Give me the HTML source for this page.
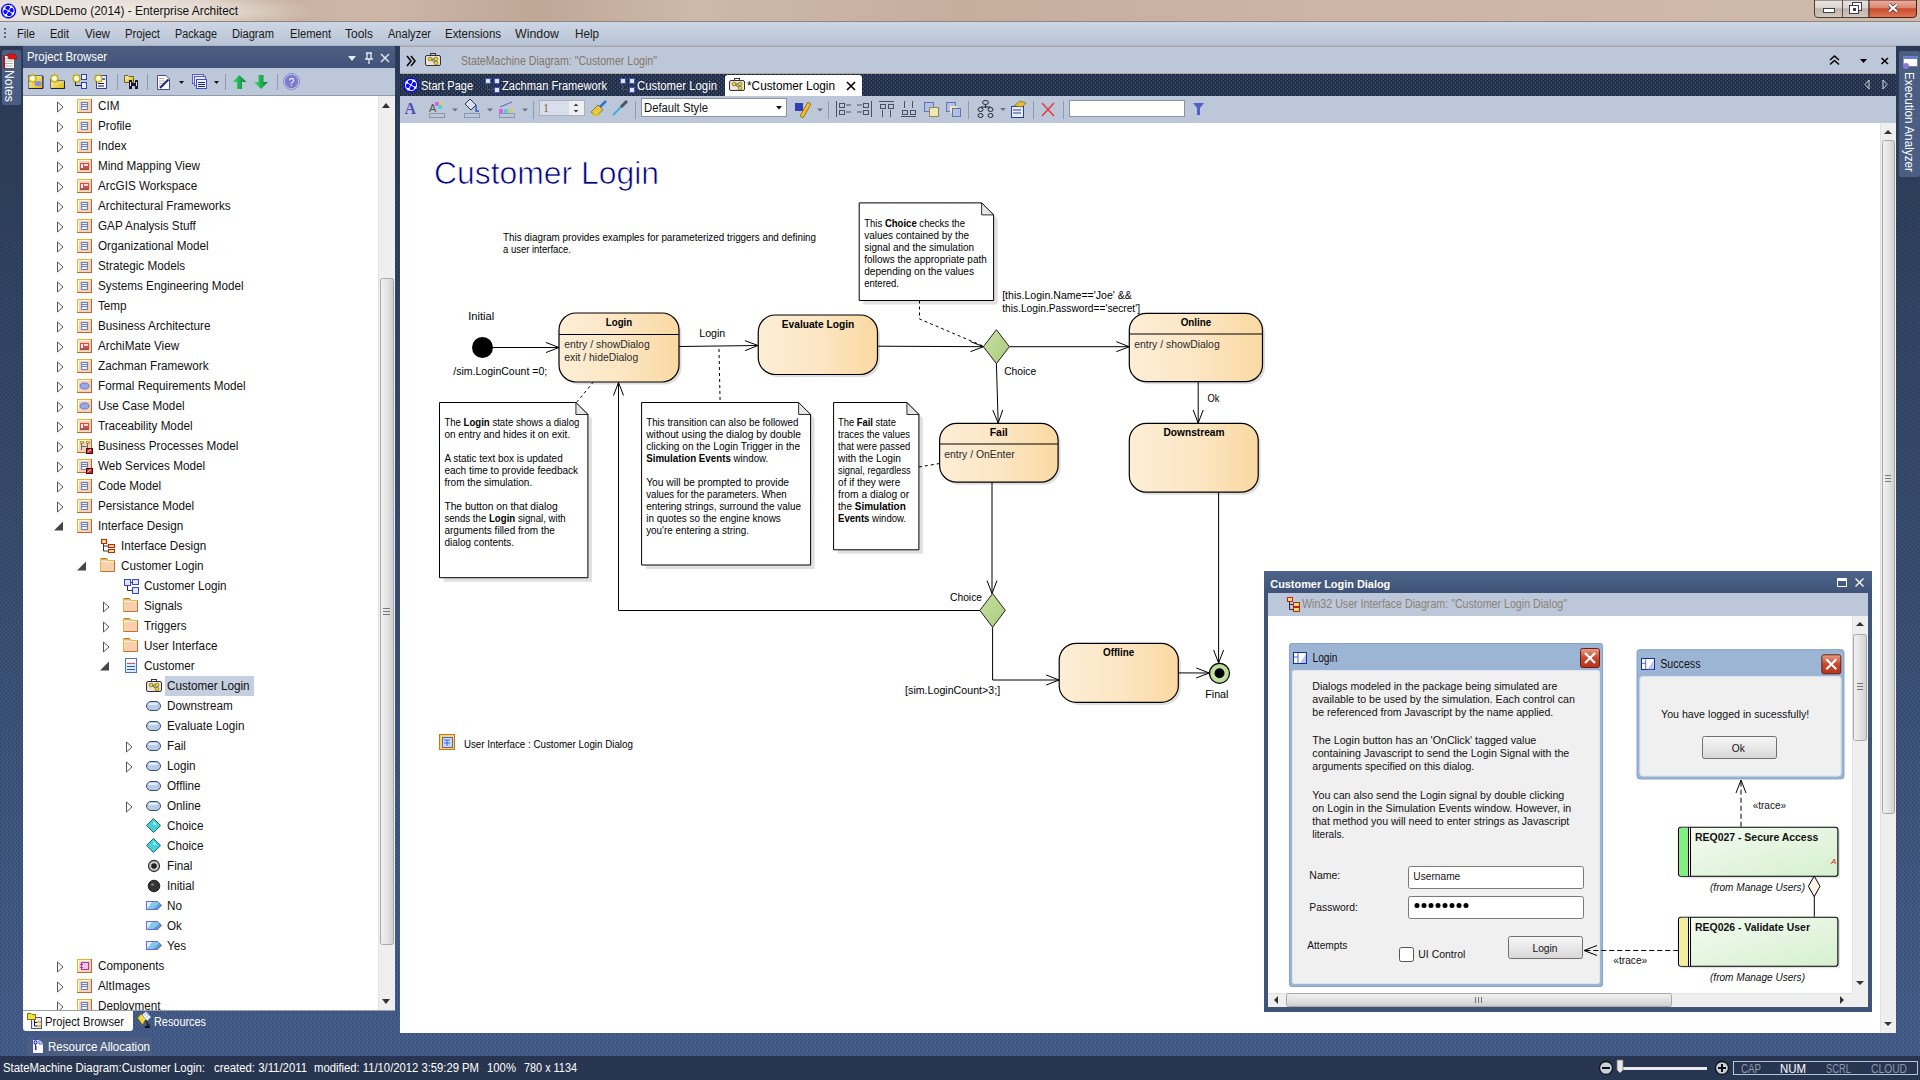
<!DOCTYPE html>
<html><head><meta charset="utf-8"><title>Enterprise Architect</title>
<style>
html,body{margin:0;padding:0;width:1920px;height:1080px;overflow:hidden;background:#3a4b6c;}
svg{display:block;font-family:"Liberation Sans", sans-serif;}
text{font-family:"Liberation Sans", sans-serif;}
</style></head><body>
<svg width="1920" height="1080" viewBox="0 0 1920 1080">
<defs>
<pattern id="navyDots" width="3" height="3" patternUnits="userSpaceOnUse">
  <rect width="3" height="3" fill="#2a3856"/><rect x="1" y="1" width="1" height="1" fill="#44557a"/>
</pattern>
<pattern id="midDots" width="4" height="4" patternUnits="userSpaceOnUse">
  <rect x="2" y="0" width="1" height="2" fill="#000" opacity="0.16"/><rect x="0" y="2" width="1" height="2" fill="#000" opacity="0.16"/>
</pattern>
<linearGradient id="bgG" x1="0" x2="0" y1="0" y2="1">
  <stop offset="0" stop-color="#2c3a56"/><stop offset="0.043" stop-color="#2c3b57"/><stop offset="0.51" stop-color="#384e70"/><stop offset="0.978" stop-color="#465e8c"/><stop offset="1" stop-color="#465e8c"/>
</linearGradient>
<radialGradient id="glowG"><stop offset="0" stop-color="#f4f0ec" stop-opacity="0.85"/><stop offset="0.6" stop-color="#f0ebe6" stop-opacity="0.6"/><stop offset="1" stop-color="#ede6e0" stop-opacity="0"/></radialGradient>
<pattern id="tabDots" width="4" height="4" patternUnits="userSpaceOnUse">
  <rect width="4" height="4" fill="#222d46"/><rect x="1" y="0" width="1" height="2" fill="#3e5075"/><rect x="3" y="2" width="1" height="2" fill="#3e5075"/>
</pattern>
<linearGradient id="titleG" x1="0" x2="1" y1="0" y2="0">
  <stop offset="0" stop-color="#e2d9d3"/><stop offset="0.06" stop-color="#d8cbc1"/><stop offset="0.12" stop-color="#c7b09f"/>
  <stop offset="0.2" stop-color="#cdb6a6"/><stop offset="0.28" stop-color="#bfa796"/><stop offset="0.36" stop-color="#cdb8a9"/>
  <stop offset="0.5" stop-color="#c6ae9d"/><stop offset="0.7" stop-color="#ccb5a5"/><stop offset="1" stop-color="#cfb9a9"/>
</linearGradient>
<linearGradient id="menuG" x1="0" x2="0" y1="0" y2="1">
  <stop offset="0" stop-color="#cdd6e4"/><stop offset="1" stop-color="#b7c3d5"/>
</linearGradient>
<linearGradient id="hdrG" x1="0" x2="0" y1="0" y2="1">
  <stop offset="0" stop-color="#4b5d81"/><stop offset="0.5" stop-color="#475a7e"/><stop offset="1" stop-color="#40527a"/>
</linearGradient>
<linearGradient id="stateG" x1="0" x2="1" y1="0" y2="0">
  <stop offset="0" stop-color="#fdeed6"/><stop offset="0.5" stop-color="#fce6c4"/><stop offset="1" stop-color="#fad9a2"/>
</linearGradient>
<linearGradient id="reqG" x1="0" x2="1" y1="0" y2="1">
  <stop offset="0" stop-color="#f4fbf2"/><stop offset="1" stop-color="#d6f0cf"/>
</linearGradient>
<linearGradient id="dlgTitleG" x1="0" x2="0" y1="0" y2="1">
  <stop offset="0" stop-color="#4f648a"/><stop offset="1" stop-color="#3f5378"/>
</linearGradient>
<linearGradient id="btnG" x1="0" x2="0" y1="0" y2="1">
  <stop offset="0" stop-color="#f6f6f6"/><stop offset="0.5" stop-color="#e8e8e8"/><stop offset="1" stop-color="#d6d6d6"/>
</linearGradient>
<linearGradient id="thumbV" x1="0" x2="1" y1="0" y2="0">
  <stop offset="0" stop-color="#f2f2f2"/><stop offset="0.5" stop-color="#e4e4e4"/><stop offset="1" stop-color="#cfcfcf"/>
</linearGradient>
<linearGradient id="thumbH" x1="0" x2="0" y1="0" y2="1">
  <stop offset="0" stop-color="#f2f2f2"/><stop offset="0.5" stop-color="#e2e2e2"/><stop offset="1" stop-color="#cdcdcd"/>
</linearGradient>
<linearGradient id="closeRed" x1="0" x2="0" y1="0" y2="1">
  <stop offset="0" stop-color="#e8a08a"/><stop offset="0.5" stop-color="#c9472c"/><stop offset="1" stop-color="#b8341c"/>
</linearGradient>
<radialGradient id="finalG"><stop offset="0" stop-color="#d8eec0"/><stop offset="1" stop-color="#b5d890"/></radialGradient>
<linearGradient id="diamG" x1="0" x2="1" y1="0" y2="1"><stop offset="0" stop-color="#c9e0a4"/><stop offset="1" stop-color="#a9cc7c"/></linearGradient>
<filter id="shadow" x="-5%" y="-5%" width="115%" height="115%"><feDropShadow dx="2" dy="2" stdDeviation="1.2" flood-color="#000" flood-opacity="0.18"/></filter>
</defs>
<rect x="0" y="0" width="1920" height="1080" fill="url(#bgG)" shape-rendering="crispEdges"/>
<rect x="0" y="0" width="1920" height="1080" fill="url(#midDots)" shape-rendering="crispEdges"/>
<rect x="0" y="0" width="1920" height="21" fill="url(#titleG)" shape-rendering="crispEdges"/>
<ellipse cx="125" cy="11" rx="190" ry="22" fill="url(#glowG)"/>
<rect x="0" y="21" width="1920" height="1" fill="#8c8580" shape-rendering="crispEdges"/>
<g transform="translate(8.5,11) rotate(-15)" shape-rendering="auto"><circle r="7.6" fill="#0a0aff"/><circle r="6.1" fill="#fff"/><circle cx="0" cy="-2.7" r="2.5" fill="#0a0aff"/><circle cx="2.7" cy="0" r="2.5" fill="#0a0aff"/><circle cx="0" cy="2.7" r="2.5" fill="#0a0aff"/><circle cx="-2.7" cy="0" r="2.5" fill="#0a0aff"/><path d="M-4.5,-4.5 L4.5,4.5 M4.5,-4.5 L-4.5,4.5" stroke="#fff" stroke-width="0.9"/></g>
<text x="21" y="15" font-size="12" fill="#111" textLength="217" lengthAdjust="spacingAndGlyphs">WSDLDemo (2014) - Enterprise Architect</text>
<linearGradient id="wbG" x1="0" x2="0" y1="0" y2="1"><stop offset="0" stop-color="#ece6e2"/><stop offset="0.45" stop-color="#dcd3cd"/><stop offset="0.5" stop-color="#bfb2a8"/><stop offset="1" stop-color="#d4c8c0"/></linearGradient>
<linearGradient id="wcG" x1="0" x2="0" y1="0" y2="1"><stop offset="0" stop-color="#eeb0a0"/><stop offset="0.45" stop-color="#d88870"/><stop offset="0.5" stop-color="#c84a2a"/><stop offset="1" stop-color="#e07a58"/></linearGradient>
<path d="M1814.5,0 V14 Q1814.5,17.5 1818,17.5 H1869 V0 Z" fill="url(#wbG)" stroke="#4a4038" stroke-width="1"/>
<path d="M1869,0 V17.5 H1913 Q1916.5,17.5 1916.5,14 V0 Z" fill="url(#wcG)" stroke="#4a2018" stroke-width="1"/>
<rect x="1841.5" y="0" width="1" height="17" fill="#5a5048" shape-rendering="crispEdges"/>
<rect x="1823.5" y="8.5" width="11" height="4" fill="#fff" stroke="#3a4050" stroke-width="1" shape-rendering="crispEdges"/>
<rect x="1852.5" y="2.5" width="9" height="8" fill="#fff" stroke="#3a4050" stroke-width="1" shape-rendering="crispEdges"/>
<rect x="1849.5" y="5.5" width="9" height="8" fill="#fff" stroke="#3a4050" stroke-width="1" shape-rendering="crispEdges"/>
<rect x="1853" y="8" width="3" height="3" fill="#3a4050" shape-rendering="crispEdges"/>
<path d="M1889,4.5 L1897,11.5 M1897,4.5 L1889,11.5" fill="none" stroke="#3a3a48" stroke-width="3.6"/>
<path d="M1889,4.5 L1897,11.5 M1897,4.5 L1889,11.5" fill="none" stroke="#fff" stroke-width="2.2"/>
<rect x="0" y="22" width="1920" height="24" fill="url(#menuG)" shape-rendering="crispEdges"/>
<rect x="4" y="28" width="2" height="2" fill="#5a6478" shape-rendering="crispEdges"/>
<rect x="4" y="32" width="2" height="2" fill="#5a6478" shape-rendering="crispEdges"/>
<rect x="4" y="36" width="2" height="2" fill="#5a6478" shape-rendering="crispEdges"/>
<text x="17" y="38" font-size="12" fill="#1a1a1a" textLength="18" lengthAdjust="spacingAndGlyphs">File</text>
<text x="50" y="38" font-size="12" fill="#1a1a1a" textLength="19" lengthAdjust="spacingAndGlyphs">Edit</text>
<text x="85" y="38" font-size="12" fill="#1a1a1a" textLength="25" lengthAdjust="spacingAndGlyphs">View</text>
<text x="125" y="38" font-size="12" fill="#1a1a1a" textLength="35" lengthAdjust="spacingAndGlyphs">Project</text>
<text x="175" y="38" font-size="12" fill="#1a1a1a" textLength="42" lengthAdjust="spacingAndGlyphs">Package</text>
<text x="232" y="38" font-size="12" fill="#1a1a1a" textLength="42" lengthAdjust="spacingAndGlyphs">Diagram</text>
<text x="290" y="38" font-size="12" fill="#1a1a1a" textLength="41" lengthAdjust="spacingAndGlyphs">Element</text>
<text x="345" y="38" font-size="12" fill="#1a1a1a" textLength="28" lengthAdjust="spacingAndGlyphs">Tools</text>
<text x="388" y="38" font-size="12" fill="#1a1a1a" textLength="43" lengthAdjust="spacingAndGlyphs">Analyzer</text>
<text x="445" y="38" font-size="12" fill="#1a1a1a" textLength="56" lengthAdjust="spacingAndGlyphs">Extensions</text>
<text x="515" y="38" font-size="12" fill="#1a1a1a" textLength="44" lengthAdjust="spacingAndGlyphs">Window</text>
<text x="575" y="38" font-size="12" fill="#1a1a1a" textLength="24" lengthAdjust="spacingAndGlyphs">Help</text>
<rect x="0" y="45" width="1920" height="1" fill="#aab4c4" shape-rendering="crispEdges"/>
<rect x="2" y="50" width="19" height="55" fill="#4a5d82" rx="2"/>
<rect x="3.5" y="55.5" width="11" height="13" fill="#fff" stroke="#555" stroke-width="1" shape-rendering="crispEdges"/>
<rect x="3" y="55" width="1.5" height="14" fill="#a02020" shape-rendering="crispEdges"/>
<path d="M5,58.5 h8 M5,61 h8 M5,63.5 h8 M5,66 h8" fill="none" stroke="#999" stroke-width="0.8"/>
<path d="M7,55 Q12,52 16.5,56 L16.5,59 L9,59 Z" fill="#e81010" stroke="#801010" stroke-width="0.6"/>
<text transform="translate(5,70) rotate(90)" font-size="12" fill="#fff" textLength="32" lengthAdjust="spacingAndGlyphs">Notes</text>
<rect x="1899" y="51" width="21" height="126" fill="#4a5d82" rx="2"/>
<rect x="1903" y="56" width="14" height="10" fill="#fff" stroke="#7788aa" stroke-width="0.8" shape-rendering="crispEdges"/>
<rect x="1903" y="56" width="14" height="3" fill="#6a7fd0" shape-rendering="crispEdges"/>
<circle cx="1906" cy="66" r="3" fill="#8c7ad0"/>
<text transform="translate(1905,72) rotate(90)" font-size="12" fill="#fff" textLength="100" lengthAdjust="spacingAndGlyphs">Execution Analyzer</text>
<rect x="23" y="46" width="372" height="22" fill="url(#hdrG)" shape-rendering="crispEdges"/>
<text x="27" y="61" font-size="12" fill="#fff" textLength="80" lengthAdjust="spacingAndGlyphs">Project Browser</text>
<path d="M348,56 L356,56 L352,61 Z" fill="#e8ecf4"/>
<path d="M366,53 L372,53 M367,53 L367,59 M371,53 L371,59 M365,59 L373,59 M369,59 L369,64" fill="none" stroke="#e8ecf4" stroke-width="1.3"/>
<path d="M381,54 L389,62 M389,54 L381,62" fill="none" stroke="#e8ecf4" stroke-width="1.4"/>
<rect x="23" y="68" width="372" height="27" fill="#bcc8da" shape-rendering="crispEdges"/>
<rect x="23" y="95" width="372" height="1" fill="#8e99ab" shape-rendering="crispEdges"/>
<linearGradient id="yelG" x1="0" x2="1" y1="0" y2="1"><stop offset="0" stop-color="#fff8c0"/><stop offset="1" stop-color="#d8b800"/></linearGradient>
<rect x="28.5" y="75.5" width="14" height="13" fill="url(#yelG)" stroke="#6a6ab0" stroke-width="1" shape-rendering="crispEdges"/>
<path d="M29,88.5 H43 V76" fill="none" stroke="#202040" stroke-width="1"/>
<ellipse cx="38" cy="83.5" rx="3.5" ry="2.5" fill="#8a8ae0"/>
<polygon points="37.10,78.50 35.46,79.72 35.75,81.75 33.72,81.46 32.50,83.10 31.28,81.46 29.25,81.75 29.54,79.72 27.90,78.50 29.54,77.28 29.25,75.25 31.28,75.54 32.50,73.90 33.72,75.54 35.75,75.25 35.46,77.28" fill="#e8d000" stroke="#9a8000" stroke-width="0.5"/>
<circle cx="32.5" cy="78.5" r="2.4" fill="#fff"/>
<path d="M50.5,88.5 V78.5 H56 L57,80.5 H64.5 V88.5 Z" fill="url(#yelG)" stroke="#6a6ab0" stroke-width="1"/>
<path d="M51,88.5 H64.5 V81" fill="none" stroke="#202040" stroke-width="1"/>
<polygon points="59.10,78.50 57.46,79.72 57.75,81.75 55.72,81.46 54.50,83.10 53.28,81.46 51.25,81.75 51.54,79.72 49.90,78.50 51.54,77.28 51.25,75.25 53.28,75.54 54.50,73.90 55.72,75.54 57.75,75.25 57.46,77.28" fill="#e8d000" stroke="#9a8000" stroke-width="0.5"/>
<circle cx="54.5" cy="78.5" r="2.4" fill="#fff"/>
<rect x="81.5" y="74.5" width="5" height="5" fill="#e8eeff" stroke="#3040b0" stroke-width="1" shape-rendering="crispEdges"/>
<rect x="81.5" y="82.5" width="5" height="6" fill="#e8eeff" stroke="#3040b0" stroke-width="1" shape-rendering="crispEdges"/>
<path d="M75.5,80 V85.5 H81" fill="none" stroke="#222" stroke-width="1"/>
<polygon points="81.10,78.50 79.46,79.72 79.75,81.75 77.72,81.46 76.50,83.10 75.28,81.46 73.25,81.75 73.54,79.72 71.90,78.50 73.54,77.28 73.25,75.25 75.28,75.54 76.50,73.90 77.72,75.54 79.75,75.25 79.46,77.28" fill="#e8d000" stroke="#9a8000" stroke-width="0.5"/>
<circle cx="76.5" cy="78.5" r="2.4" fill="#fff"/>
<rect x="96.5" y="75.5" width="10" height="13" fill="#eef2ff" stroke="#3a4090" stroke-width="1" shape-rendering="crispEdges"/>
<path d="M98,83.5 H104 M98,86 H104" fill="none" stroke="#222" stroke-width="1"/>
<rect x="102" y="78" width="3" height="2" fill="#3a70d0" shape-rendering="crispEdges"/>
<polygon points="103.10,78.50 101.46,79.72 101.75,81.75 99.72,81.46 98.50,83.10 97.28,81.46 95.25,81.75 95.54,79.72 93.90,78.50 95.54,77.28 95.25,75.25 97.28,75.54 98.50,73.90 99.72,75.54 101.75,75.25 101.46,77.28" fill="#e8d000" stroke="#9a8000" stroke-width="0.5"/>
<circle cx="98.5" cy="78.5" r="2.4" fill="#fff"/>
<rect x="117" y="74" width="1" height="16" fill="#8e99ab" shape-rendering="crispEdges"/>
<path d="M124.5,82.5 V75.5 H128 L129,76.5 H133.5 V82.5 Z" fill="url(#yelG)" stroke="#6a6030" stroke-width="1"/>
<path d="M129,80 h3 v9 h-3 Z M135,80 h3 v9 h-3 Z" fill="#1a1a30"/>
<rect x="131" y="83" width="5" height="3" fill="#1a1a30" shape-rendering="crispEdges"/>
<rect x="130" y="82" width="1" height="4" fill="#e0e0f0" shape-rendering="crispEdges"/>
<rect x="136" y="82" width="1" height="4" fill="#e0e0f0" shape-rendering="crispEdges"/>
<rect x="147" y="74" width="1" height="16" fill="#8e99ab" shape-rendering="crispEdges"/>
<path d="M157.5,75.5 H166 L169.5,79 V89.5 H157.5 Z" fill="#fff" stroke="#4a4a90" stroke-width="1"/>
<path d="M159,78.5 h5 M159,81 h6 M159,83.5 h6 M159,86 h5" fill="none" stroke="#aaa" stroke-width="1"/>
<path d="M160,88 L168.5,79.5" fill="none" stroke="#1a2a80" stroke-width="2"/>
<path d="M179,81 L184,81 L181.5,84 Z" fill="#111"/>
<rect x="192.5" y="74.5" width="11" height="9" fill="#e0e8ff" stroke="#5a60c0" stroke-width="1" shape-rendering="crispEdges"/>
<rect x="194.5" y="76.5" width="11" height="9" fill="#e8eeff" stroke="#5a60c0" stroke-width="1" shape-rendering="crispEdges"/>
<rect x="196.5" y="79.5" width="10" height="9" fill="#eef2ff" stroke="#3a50c0" stroke-width="1" shape-rendering="crispEdges"/>
<path d="M198,82.5 h7 M198,84.5 h7 M198,86.5 h7" fill="none" stroke="#1a2a60" stroke-width="1"/>
<path d="M214,81 L219,81 L216.5,84 Z" fill="#111"/>
<rect x="225" y="74" width="1" height="16" fill="#8e99ab" shape-rendering="crispEdges"/>
<linearGradient id="grnG" x1="0" x2="1" y1="0" y2="0"><stop offset="0" stop-color="#40e070"/><stop offset="0.5" stop-color="#20b050"/><stop offset="1" stop-color="#107a38"/></linearGradient>
<path d="M239.5,75 L246.5,82 H242 V89 H237 V82 H232.5 Z" fill="url(#grnG)"/>
<path d="M261,89 L268,82 H263.5 V75 H258.5 V82 H254 Z" fill="url(#grnG)"/>
<rect x="277" y="74" width="1" height="16" fill="#8e99ab" shape-rendering="crispEdges"/>
<circle cx="291.5" cy="81.5" r="7.3" fill="#7c7cc8" stroke="#c8ccf0" stroke-width="1.2"/>
<circle cx="291.5" cy="81.5" r="8" fill="none" stroke="#5a5ab0" stroke-width="0.6"/>
<text x="291.5" y="85.5" font-size="10" fill="#fff" text-anchor="middle">?</text>
<rect x="23" y="96" width="355" height="914" fill="#fff" shape-rendering="crispEdges"/>
<rect x="378" y="96" width="17" height="914" fill="#efefef" shape-rendering="crispEdges"/>
<rect x="378" y="96" width="1" height="914" fill="#e3e3e3" shape-rendering="crispEdges"/>
<path d="M382,108 L390,108 L386,103 Z" fill="#333"/>
<path d="M382,999 L390,999 L386,1004 Z" fill="#333"/>
<rect x="380.5" y="278.5" width="13" height="666" fill="url(#thumbV)" stroke="#a8a8a8" stroke-width="1" rx="2"/>
<rect x="383" y="608" width="7" height="1" fill="#777" shape-rendering="crispEdges"/>
<rect x="383" y="611" width="7" height="1" fill="#777" shape-rendering="crispEdges"/>
<rect x="383" y="614" width="7" height="1" fill="#777" shape-rendering="crispEdges"/>
<rect x="23" y="1010" width="372" height="1" fill="#9aa0aa" shape-rendering="crispEdges"/>
<g shape-rendering="auto">
<path d="M23,1011 L133,1011 L133,1028 Q133,1031 130,1031 L26,1031 Q23,1031 23,1028 Z" fill="#fff"/>
</g>
<rect x="31.5" y="1017.5" width="10" height="11" fill="#e8ecff" stroke="#4a50a0" stroke-width="1" shape-rendering="crispEdges"/>
<path d="M34.5,1020 V1026 H37 M34.5,1022.5 H37" fill="none" stroke="#222" stroke-width="1"/>
<rect x="37" y="1021" width="4" height="2" fill="#e0c020" shape-rendering="crispEdges"/>
<rect x="37" y="1025" width="4" height="2" fill="#e0c020" shape-rendering="crispEdges"/>
<path d="M27.5,1019.5 V1013.5 H31 L32,1014.5 H35.5 V1019.5 Z" fill="#f0e040" stroke="#807010" stroke-width="1"/>
<text x="45" y="1026" font-size="12" fill="#111" textLength="79" lengthAdjust="spacingAndGlyphs">Project Browser</text>
<path d="M137.5,1018 L141,1014 L146,1019 L142.5,1025 Z" fill="#f0d840" stroke="#706010" stroke-width="0.8"/>
<path d="M142,1015 L146,1011.5 L151,1017 L147,1021 Z" fill="#fff" stroke="#8090c0" stroke-width="0.7"/>
<path d="M144,1014 L149,1019 M145.5,1012.5 L150,1017.5 M143,1016 L147.5,1013 M144.5,1018 L149,1015" fill="none" stroke="#a0a8d0" stroke-width="0.5"/>
<path d="M146,1020 L148,1026 L149.5,1024" fill="none" stroke="#222" stroke-width="1.2"/>
<rect x="145" y="1026" width="5" height="1.5" fill="#111" shape-rendering="crispEdges"/>
<text x="154" y="1026" font-size="12" fill="#fff" textLength="52" lengthAdjust="spacingAndGlyphs">Resources</text>
<rect x="28" y="1037" width="123" height="19" fill="#4b5e82" shape-rendering="crispEdges"/>
<path d="M32.5,1039.5 H39 L43.5,1044 V1053.5 H32.5 Z" fill="#fff" stroke="#4050b0" stroke-width="1"/>
<path d="M39,1039.5 V1044 H43.5" fill="#c8d0f0" stroke="#4050b0" stroke-width="0.8"/>
<circle cx="35.5" cy="1042.5" r="1.6" fill="none" stroke="#2030a0" stroke-width="1.1"/>
<path d="M35.5,1044 V1050 M35.5,1047 H37 M35.5,1049 H37" fill="none" stroke="#2030a0" stroke-width="1.1"/>
<text x="48" y="1051" font-size="12" fill="#fff" textLength="102" lengthAdjust="spacingAndGlyphs">Resource Allocation</text>
<rect x="0" y="1056" width="1920" height="24" fill="#283550" shape-rendering="crispEdges"/>
<text x="3" y="1072" font-size="12" fill="#fff" textLength="202" lengthAdjust="spacingAndGlyphs">StateMachine Diagram:Customer Login:</text>
<text x="214" y="1072" font-size="12" fill="#fff" textLength="93" lengthAdjust="spacingAndGlyphs">created: 3/11/2011</text>
<text x="314" y="1072" font-size="12" fill="#fff" textLength="165" lengthAdjust="spacingAndGlyphs">modified: 11/10/2012 3:59:29 PM</text>
<text x="487" y="1072" font-size="12" fill="#fff" textLength="29" lengthAdjust="spacingAndGlyphs">100%</text>
<text x="524" y="1072" font-size="12" fill="#fff" textLength="53" lengthAdjust="spacingAndGlyphs">780 x 1134</text>
<g shape-rendering="auto">
<circle cx="1606" cy="1068" r="6.5" fill="#c8d0de" stroke="#111" stroke-width="1.3"/>
<rect x="1602" y="1067.3" width="8" height="1.6" fill="#111" shape-rendering="crispEdges"/>
<rect x="1622" y="1066.5" width="85" height="3" fill="#e8e8e8" shape-rendering="crispEdges"/>
<path d="M1617,1060 h6 v10 l-3,3 l-3,-3 Z" fill="#e6e6e6" stroke="#777" stroke-width="0.7"/>
<circle cx="1722" cy="1068" r="6.5" fill="#c8d0de" stroke="#111" stroke-width="1.3"/>
<rect x="1718" y="1067.3" width="8" height="1.6" fill="#111" shape-rendering="crispEdges"/>
<rect x="1721.2" y="1064" width="1.6" height="8" fill="#111" shape-rendering="crispEdges"/>
</g>
<rect x="1733.5" y="1061.5" width="184" height="13" fill="none" stroke="#b8c4d8" stroke-width="1" shape-rendering="crispEdges"/>
<text x="1741" y="1073" font-size="12" fill="#8c96a8" textLength="20" lengthAdjust="spacingAndGlyphs">CAP</text>
<text x="1780" y="1073" font-size="12" fill="#fff" textLength="26" lengthAdjust="spacingAndGlyphs">NUM</text>
<text x="1826" y="1073" font-size="12" fill="#8c96a8" textLength="25" lengthAdjust="spacingAndGlyphs">SCRL</text>
<text x="1871" y="1073" font-size="12" fill="#8c96a8" textLength="36" lengthAdjust="spacingAndGlyphs">CLOUD</text>
<rect x="400" y="46" width="1496" height="28" fill="#bcc8da" shape-rendering="crispEdges"/>
<rect x="400" y="46" width="1496" height="1" fill="#aca6a4" shape-rendering="crispEdges"/>
<rect x="400" y="73" width="1496" height="1" fill="#b0a8a0" shape-rendering="crispEdges"/>
<path d="M407,56 L411,61 L407,66 M411,56 L415,61 L411,66" fill="none" stroke="#000" stroke-width="1.5"/>
<g shape-rendering="auto"><rect x="430.5" y="53.5" width="5" height="3" fill="none" stroke="#333" stroke-width="1"/><rect x="425.5" y="55.5" width="15" height="10" rx="1.5" fill="#f2e2dc" stroke="#333" stroke-width="1"/><path d="M430,59 H436 V63 M430,59 L436,63" stroke="#333" stroke-width="0.8" fill="none"/><circle cx="430" cy="59" r="1.9" fill="#f0e000" stroke="#555" stroke-width="0.6"/><circle cx="436" cy="59" r="1.9" fill="#f0e000" stroke="#555" stroke-width="0.6"/><circle cx="436" cy="63" r="1.9" fill="#f0e000" stroke="#555" stroke-width="0.6"/></g>
<text x="461" y="65" font-size="12" fill="#857565" textLength="196" lengthAdjust="spacingAndGlyphs">StateMachine Diagram: "Customer Login"</text>
<path d="M1830,60 L1834.5,56 L1839,60 M1830,64.5 L1834.5,60.5 L1839,64.5" fill="none" stroke="#000" stroke-width="1.5"/>
<path d="M1860,59 L1867,59 L1863.5,63 Z" fill="#000"/>
<path d="M1881.5,58 L1888,64 M1888,58 L1881.5,64" fill="none" stroke="#000" stroke-width="1.6"/>
<rect x="400" y="74" width="1496" height="22" fill="url(#tabDots)" shape-rendering="crispEdges"/>
<g transform="translate(411,85) rotate(-15)" shape-rendering="auto"><circle r="7.6" fill="#0a0aff"/><circle r="6.1" fill="#fff"/><circle cx="0" cy="-2.7" r="2.5" fill="#0a0aff"/><circle cx="2.7" cy="0" r="2.5" fill="#0a0aff"/><circle cx="0" cy="2.7" r="2.5" fill="#0a0aff"/><circle cx="-2.7" cy="0" r="2.5" fill="#0a0aff"/><path d="M-4.5,-4.5 L4.5,4.5 M4.5,-4.5 L-4.5,4.5" stroke="#fff" stroke-width="0.9"/></g>
<text x="421" y="90" font-size="12" fill="#fff" textLength="52" lengthAdjust="spacingAndGlyphs">Start Page</text>
<rect x="485" y="78" width="5" height="5" fill="#dde4ff" stroke="#4050c0" stroke-width="1" shape-rendering="crispEdges"/>
<rect x="494" y="78" width="5" height="5" fill="#dde4ff" stroke="#4050c0" stroke-width="1" shape-rendering="crispEdges"/>
<rect x="494" y="87" width="5" height="5" fill="#dde4ff" stroke="#4050c0" stroke-width="1" shape-rendering="crispEdges"/>
<path d="M487.5,83 V89.5 H494" fill="none" stroke="#555" stroke-width="0.8"/>
<text x="502" y="90" font-size="12" fill="#fff" textLength="105" lengthAdjust="spacingAndGlyphs">Zachman Framework</text>
<rect x="620" y="78" width="5" height="5" fill="#dde4ff" stroke="#4050c0" stroke-width="1" shape-rendering="crispEdges"/>
<rect x="629" y="78" width="5" height="5" fill="#dde4ff" stroke="#4050c0" stroke-width="1" shape-rendering="crispEdges"/>
<rect x="629" y="87" width="5" height="5" fill="#dde4ff" stroke="#4050c0" stroke-width="1" shape-rendering="crispEdges"/>
<path d="M622.5,83 V89.5 H629" fill="none" stroke="#555" stroke-width="0.8"/>
<text x="637" y="90" font-size="12" fill="#fff" textLength="80" lengthAdjust="spacingAndGlyphs">Customer Login</text>
<g shape-rendering="auto">
<path d="M725,96 L725,78 Q725,75 728,75 L859,75 Q862,75 862,78 L862,96 Z" fill="#fff"/>
</g>
<g shape-rendering="auto"><rect x="734.5" y="78.5" width="5" height="3" fill="none" stroke="#333" stroke-width="1"/><rect x="729.5" y="80.5" width="15" height="10" rx="1.5" fill="#f2e2dc" stroke="#333" stroke-width="1"/><path d="M734,84 H740 V88 M734,84 L740,88" stroke="#333" stroke-width="0.8" fill="none"/><circle cx="734" cy="84" r="1.9" fill="#f0e000" stroke="#555" stroke-width="0.6"/><circle cx="740" cy="84" r="1.9" fill="#f0e000" stroke="#555" stroke-width="0.6"/><circle cx="740" cy="88" r="1.9" fill="#f0e000" stroke="#555" stroke-width="0.6"/></g>
<text x="747" y="90" font-size="12" fill="#000" textLength="88" lengthAdjust="spacingAndGlyphs">*Customer Login</text>
<path d="M847,82 L855,90 M855,82 L847,90" fill="none" stroke="#000" stroke-width="1.6"/>
<path d="M1869,80 L1865,84.5 L1869,89 Z" fill="none" stroke="#d0d8e8" stroke-width="1"/>
<path d="M1883,80 L1887,84.5 L1883,89 Z" fill="none" stroke="#d0d8e8" stroke-width="1"/>
<rect x="400" y="96" width="1496" height="27" fill="#bcc8da" shape-rendering="crispEdges"/>
<text x="404.5" y="114" font-size="16" fill="#5050b0" font-weight="bold" style="font-family:'Liberation Serif', serif">A</text>
<text x="429" y="112" font-size="11" fill="#505050">A</text>
<rect x="435" y="102" width="4" height="4" fill="#e060e0" shape-rendering="crispEdges"/>
<rect x="439" y="102" width="4" height="4" fill="#e0d070" shape-rendering="crispEdges"/>
<rect x="438" y="105" width="4" height="4" fill="#50d0e0" shape-rendering="crispEdges"/>
<rect x="429.5" y="113.5" width="15" height="4" fill="none" stroke="#8a96b0" stroke-width="1" shape-rendering="crispEdges"/>
<path d="M452,108.5 L458,108.5 L455,111.5 Z" fill="#6a7080"/>
<path d="M465,104 L470,99 L476,105 L471,110 Z" fill="#d8e0f8" stroke="#333" stroke-width="1"/>
<path d="M476,105 V111 H479" fill="none" stroke="#3060c0" stroke-width="1.5"/>
<rect x="464.5" y="113.5" width="15" height="4" fill="none" stroke="#8a96b0" stroke-width="1" shape-rendering="crispEdges"/>
<path d="M487,108.5 L493,108.5 L490,111.5 Z" fill="#6a7080"/>
<path d="M500,107 L512,102" fill="none" stroke="#6060c0" stroke-width="1"/>
<rect x="499" y="109" width="4" height="4" fill="#e060e0" shape-rendering="crispEdges"/>
<rect x="504" y="109" width="4" height="4" fill="#50d0e0" shape-rendering="crispEdges"/>
<rect x="509" y="109" width="4" height="4" fill="#d8c870" shape-rendering="crispEdges"/>
<rect x="499.5" y="113.5" width="15" height="4" fill="none" stroke="#8a96b0" stroke-width="1" shape-rendering="crispEdges"/>
<path d="M522,108.5 L528,108.5 L525,111.5 Z" fill="#6a7080"/>
<rect x="533" y="101" width="1" height="18" fill="#8e99ab" shape-rendering="crispEdges"/>
<rect x="539.5" y="100.5" width="45" height="15" fill="#d8dfea" stroke="#a8b0bd" stroke-width="1" shape-rendering="crispEdges"/>
<rect x="569" y="101" width="15" height="14" fill="#eef0f4" shape-rendering="crispEdges"/>
<path d="M573.5,106 L576,103.5 L578.5,106 Z M573.5,110 L576,112.5 L578.5,110 Z" fill="#444"/>
<text x="543" y="112" font-size="12" fill="#7a6a50" style="font-family:'Liberation Serif', serif">1</text>
<path d="M591,112 L598,105 L603,110 L596,116 Z" fill="#e8c840" stroke="#7a6a20" stroke-width="0.8"/>
<path d="M600,107 L606,101" fill="none" stroke="#3070d0" stroke-width="2.5"/>
<path d="M592,115 h8" fill="none" stroke="#d8d020" stroke-width="1.5"/>
<path d="M613,115 L622,106" fill="none" stroke="#40b0d0" stroke-width="2"/>
<path d="M621,107 L627,101" fill="none" stroke="#505060" stroke-width="3"/>
<rect x="635" y="101" width="1" height="18" fill="#8e99ab" shape-rendering="crispEdges"/>
<rect x="641.5" y="98.5" width="145" height="18" fill="#fff" stroke="#8a92a0" stroke-width="1" shape-rendering="crispEdges"/>
<text x="644" y="112" font-size="12" fill="#111" textLength="64" lengthAdjust="spacingAndGlyphs">Default Style</text>
<path d="M776,106 L782,106 L779,109.5 Z" fill="#111"/>
<rect x="795" y="103" width="8" height="8" fill="#3040b0" shape-rendering="crispEdges"/>
<path d="M800,116 L808,102 L811,104 L803,118 Z" fill="#f0c020" stroke="#805000" stroke-width="0.7"/>
<path d="M817,108.5 L823,108.5 L820,111.5 Z" fill="#6a7080"/>
<rect x="828" y="101" width="1" height="18" fill="#8e99ab" shape-rendering="crispEdges"/>
<path d="M836.5,101 V117" fill="none" stroke="#4a5068" stroke-width="1"/>
<rect x="839" y="103" width="5" height="4" fill="none" stroke="#4a5068" stroke-width="1" shape-rendering="crispEdges"/>
<rect x="839" y="110" width="5" height="4" fill="none" stroke="#4a5068" stroke-width="1" shape-rendering="crispEdges"/>
<path d="M846,105 h5 M846,112 h5" fill="none" stroke="#4a5068" stroke-width="1"/>
<path d="M871.5,101 V117" fill="none" stroke="#4a5068" stroke-width="1"/>
<rect x="863" y="103" width="5" height="4" fill="none" stroke="#4a5068" stroke-width="1" shape-rendering="crispEdges"/>
<rect x="863" y="110" width="5" height="4" fill="none" stroke="#4a5068" stroke-width="1" shape-rendering="crispEdges"/>
<path d="M857,105 h5 M857,112 h5" fill="none" stroke="#4a5068" stroke-width="1"/>
<path d="M879,101.5 H894" fill="none" stroke="#4a5068" stroke-width="1"/>
<rect x="880" y="104" width="5" height="4" fill="none" stroke="#4a5068" stroke-width="1" shape-rendering="crispEdges"/>
<rect x="888" y="104" width="5" height="4" fill="none" stroke="#4a5068" stroke-width="1" shape-rendering="crispEdges"/>
<path d="M882.5,110 v7 M890.5,110 v7" fill="none" stroke="#4a5068" stroke-width="1"/>
<path d="M901,116.5 H916" fill="none" stroke="#4a5068" stroke-width="1"/>
<rect x="902" y="110" width="5" height="4" fill="none" stroke="#4a5068" stroke-width="1" shape-rendering="crispEdges"/>
<rect x="910" y="110" width="5" height="4" fill="none" stroke="#4a5068" stroke-width="1" shape-rendering="crispEdges"/>
<path d="M904.5,101 v7 M912.5,101 v7" fill="none" stroke="#4a5068" stroke-width="1"/>
<rect x="924" y="102" width="9" height="9" fill="#b0c0e8" stroke="#5060a0" stroke-width="0.8" shape-rendering="crispEdges"/>
<rect x="929" y="107" width="9" height="9" fill="#f0e8b0" stroke="#807040" stroke-width="0.8" shape-rendering="crispEdges"/>
<rect x="946" y="102" width="9" height="9" fill="#b0c0e8" stroke="#5060a0" stroke-width="0.8" shape-rendering="crispEdges"/>
<rect x="950" y="106" width="7" height="7" fill="#f0e8b0" shape-rendering="crispEdges"/>
<rect x="952" y="108" width="8" height="8" fill="#b0c0e8" stroke="#5060a0" stroke-width="0.8" shape-rendering="crispEdges"/>
<rect x="968" y="101" width="1" height="18" fill="#8e99ab" shape-rendering="crispEdges"/>
<g shape-rendering="auto" fill="none" stroke="#222" stroke-width="1">
<ellipse cx="985.5" cy="102.5" rx="3" ry="2"/><ellipse cx="980.5" cy="109.5" rx="2.5" ry="2"/><ellipse cx="990.5" cy="109.5" rx="2.5" ry="2"/><ellipse cx="980.5" cy="115.5" rx="2.5" ry="2"/><ellipse cx="990.5" cy="115.5" rx="2.5" ry="2"/><path d="M985.5,104.5 V108 M980.5,107 H990.5"/>
</g>
<path d="M1000,108 L1006,108 L1003,111 Z" fill="#6a7080"/>
<rect x="1011" y="106" width="12" height="11" fill="#e8eeff" stroke="#2040a0" stroke-width="1" shape-rendering="crispEdges"/>
<path d="M1013,110 h8 M1013,113 h8" fill="none" stroke="#2040a0" stroke-width="1"/>
<path d="M1014,106 L1020,101 L1026,103 L1022,107 Z" fill="#e0c030" stroke="#705010" stroke-width="0.6"/>
<rect x="1033" y="101" width="1" height="18" fill="#8e99ab" shape-rendering="crispEdges"/>
<path d="M1042,103 L1054,116 M1054,103 L1042,116" fill="none" stroke="#e04040" stroke-width="1.6"/>
<rect x="1063" y="101" width="1" height="18" fill="#8e99ab" shape-rendering="crispEdges"/>
<rect x="1069.5" y="100.5" width="115" height="16" fill="#fff" stroke="#8a92a0" stroke-width="1" shape-rendering="crispEdges"/>
<path d="M1193,103 L1204,103 L1200,108 L1200,115 L1197,115 L1197,108 Z" fill="#5060c8"/>
<rect x="400" y="123" width="1496" height="910" fill="#fff" shape-rendering="crispEdges"/>
<rect x="1880" y="123" width="16" height="910" fill="#efefef" shape-rendering="crispEdges"/>
<rect x="1880" y="123" width="1" height="910" fill="#e0e0e0" shape-rendering="crispEdges"/>
<path d="M1884,134 L1892,134 L1888,130 Z" fill="#333"/>
<path d="M1884,1022 L1892,1022 L1888,1026 Z" fill="#333"/>
<rect x="1882.5" y="140.5" width="12" height="673" fill="url(#thumbV)" stroke="#a8a8a8" stroke-width="1" rx="2"/>
<rect x="1885" y="475" width="6" height="1" fill="#777" shape-rendering="crispEdges"/>
<rect x="1885" y="478" width="6" height="1" fill="#777" shape-rendering="crispEdges"/>
<rect x="1885" y="481" width="6" height="1" fill="#777" shape-rendering="crispEdges"/>
<svg x="23" y="96" width="355" height="914" overflow="hidden">
<g transform="translate(-23,-96)">
<path d="M57.5,102 L63,107 L57.5,112 Z" fill="#fff" stroke="#555" stroke-width="1" shape-rendering="auto"/>
<rect x="77" y="99" width="15" height="14" fill="#c8642a" shape-rendering="crispEdges"/>
<rect x="77" y="99" width="14" height="13" fill="#e8b430" shape-rendering="crispEdges"/>
<rect x="78" y="100" width="13" height="12" fill="#f6d3b8" shape-rendering="crispEdges"/>
<rect x="78" y="100" width="12" height="1" fill="#fffbe8" shape-rendering="crispEdges"/>
<rect x="78" y="100" width="1" height="11" fill="#fffbe8" shape-rendering="crispEdges"/>
<rect x="81.5" y="102.5" width="6" height="7" fill="#f0f4ff" stroke="#6a80c0" stroke-width="1" shape-rendering="crispEdges"/>
<rect x="82" y="104" width="5" height="1" fill="#6a80c0" shape-rendering="crispEdges"/>
<rect x="82" y="106" width="5" height="1" fill="#6a80c0" shape-rendering="crispEdges"/>
<text x="98" y="110" font-size="12" fill="#111" textLength="21.4" lengthAdjust="spacingAndGlyphs">CIM</text>
<path d="M57.5,122 L63,127 L57.5,132 Z" fill="#fff" stroke="#555" stroke-width="1" shape-rendering="auto"/>
<rect x="77" y="119" width="15" height="14" fill="#c8642a" shape-rendering="crispEdges"/>
<rect x="77" y="119" width="14" height="13" fill="#e8b430" shape-rendering="crispEdges"/>
<rect x="78" y="120" width="13" height="12" fill="#f6d3b8" shape-rendering="crispEdges"/>
<rect x="78" y="120" width="12" height="1" fill="#fffbe8" shape-rendering="crispEdges"/>
<rect x="78" y="120" width="1" height="11" fill="#fffbe8" shape-rendering="crispEdges"/>
<rect x="81.5" y="122.5" width="6" height="7" fill="#f0f4ff" stroke="#6a80c0" stroke-width="1" shape-rendering="crispEdges"/>
<rect x="82" y="124" width="5" height="1" fill="#6a80c0" shape-rendering="crispEdges"/>
<rect x="82" y="126" width="5" height="1" fill="#6a80c0" shape-rendering="crispEdges"/>
<text x="98" y="130" font-size="12" fill="#111" textLength="33.2" lengthAdjust="spacingAndGlyphs">Profile</text>
<path d="M57.5,142 L63,147 L57.5,152 Z" fill="#fff" stroke="#555" stroke-width="1" shape-rendering="auto"/>
<rect x="77" y="139" width="15" height="14" fill="#c8642a" shape-rendering="crispEdges"/>
<rect x="77" y="139" width="14" height="13" fill="#e8b430" shape-rendering="crispEdges"/>
<rect x="78" y="140" width="13" height="12" fill="#f6d3b8" shape-rendering="crispEdges"/>
<rect x="78" y="140" width="12" height="1" fill="#fffbe8" shape-rendering="crispEdges"/>
<rect x="78" y="140" width="1" height="11" fill="#fffbe8" shape-rendering="crispEdges"/>
<rect x="81.5" y="142.5" width="6" height="7" fill="#f0f4ff" stroke="#6a80c0" stroke-width="1" shape-rendering="crispEdges"/>
<rect x="82" y="144" width="5" height="1" fill="#6a80c0" shape-rendering="crispEdges"/>
<rect x="82" y="146" width="5" height="1" fill="#6a80c0" shape-rendering="crispEdges"/>
<text x="98" y="150" font-size="12" fill="#111" textLength="28.6" lengthAdjust="spacingAndGlyphs">Index</text>
<path d="M57.5,162 L63,167 L57.5,172 Z" fill="#fff" stroke="#555" stroke-width="1" shape-rendering="auto"/>
<rect x="77" y="159" width="15" height="14" fill="#c8642a" shape-rendering="crispEdges"/>
<rect x="77" y="159" width="14" height="13" fill="#e8b430" shape-rendering="crispEdges"/>
<rect x="78" y="160" width="13" height="12" fill="#f6d3b8" shape-rendering="crispEdges"/>
<rect x="78" y="160" width="12" height="1" fill="#fffbe8" shape-rendering="crispEdges"/>
<rect x="78" y="160" width="1" height="11" fill="#fffbe8" shape-rendering="crispEdges"/>
<rect x="80" y="163" width="9" height="6" fill="#e04848" shape-rendering="crispEdges"/>
<rect x="81" y="164" width="2" height="4" fill="#fff" shape-rendering="crispEdges"/>
<rect x="84" y="164" width="4" height="2" fill="#ffd8d8" shape-rendering="crispEdges"/>
<rect x="80" y="169" width="9" height="1" fill="#606060" shape-rendering="crispEdges"/>
<text x="98" y="170" font-size="12" fill="#111" textLength="101.9" lengthAdjust="spacingAndGlyphs">Mind Mapping View</text>
<path d="M57.5,182 L63,187 L57.5,192 Z" fill="#fff" stroke="#555" stroke-width="1" shape-rendering="auto"/>
<rect x="77" y="179" width="15" height="14" fill="#c8642a" shape-rendering="crispEdges"/>
<rect x="77" y="179" width="14" height="13" fill="#e8b430" shape-rendering="crispEdges"/>
<rect x="78" y="180" width="13" height="12" fill="#f6d3b8" shape-rendering="crispEdges"/>
<rect x="78" y="180" width="12" height="1" fill="#fffbe8" shape-rendering="crispEdges"/>
<rect x="78" y="180" width="1" height="11" fill="#fffbe8" shape-rendering="crispEdges"/>
<rect x="80" y="183" width="9" height="6" fill="#e04848" shape-rendering="crispEdges"/>
<rect x="81" y="184" width="2" height="4" fill="#fff" shape-rendering="crispEdges"/>
<rect x="84" y="184" width="4" height="2" fill="#ffd8d8" shape-rendering="crispEdges"/>
<rect x="80" y="189" width="9" height="1" fill="#606060" shape-rendering="crispEdges"/>
<text x="98" y="190" font-size="12" fill="#111" textLength="99.2" lengthAdjust="spacingAndGlyphs">ArcGIS Workspace</text>
<path d="M57.5,202 L63,207 L57.5,212 Z" fill="#fff" stroke="#555" stroke-width="1" shape-rendering="auto"/>
<rect x="77" y="199" width="15" height="14" fill="#c8642a" shape-rendering="crispEdges"/>
<rect x="77" y="199" width="14" height="13" fill="#e8b430" shape-rendering="crispEdges"/>
<rect x="78" y="200" width="13" height="12" fill="#f6d3b8" shape-rendering="crispEdges"/>
<rect x="78" y="200" width="12" height="1" fill="#fffbe8" shape-rendering="crispEdges"/>
<rect x="78" y="200" width="1" height="11" fill="#fffbe8" shape-rendering="crispEdges"/>
<rect x="81.5" y="202.5" width="6" height="7" fill="#f0f4ff" stroke="#6a80c0" stroke-width="1" shape-rendering="crispEdges"/>
<rect x="82" y="204" width="5" height="1" fill="#6a80c0" shape-rendering="crispEdges"/>
<rect x="82" y="206" width="5" height="1" fill="#6a80c0" shape-rendering="crispEdges"/>
<text x="98" y="210" font-size="12" fill="#111" textLength="132.6" lengthAdjust="spacingAndGlyphs">Architectural Frameworks</text>
<path d="M57.5,222 L63,227 L57.5,232 Z" fill="#fff" stroke="#555" stroke-width="1" shape-rendering="auto"/>
<rect x="77" y="219" width="15" height="14" fill="#c8642a" shape-rendering="crispEdges"/>
<rect x="77" y="219" width="14" height="13" fill="#e8b430" shape-rendering="crispEdges"/>
<rect x="78" y="220" width="13" height="12" fill="#f6d3b8" shape-rendering="crispEdges"/>
<rect x="78" y="220" width="12" height="1" fill="#fffbe8" shape-rendering="crispEdges"/>
<rect x="78" y="220" width="1" height="11" fill="#fffbe8" shape-rendering="crispEdges"/>
<rect x="81.5" y="222.5" width="6" height="7" fill="#f0f4ff" stroke="#6a80c0" stroke-width="1" shape-rendering="crispEdges"/>
<rect x="82" y="224" width="5" height="1" fill="#6a80c0" shape-rendering="crispEdges"/>
<rect x="82" y="226" width="5" height="1" fill="#6a80c0" shape-rendering="crispEdges"/>
<text x="98" y="230" font-size="12" fill="#111" textLength="97.7" lengthAdjust="spacingAndGlyphs">GAP Analysis Stuff</text>
<path d="M57.5,242 L63,247 L57.5,252 Z" fill="#fff" stroke="#555" stroke-width="1" shape-rendering="auto"/>
<rect x="77" y="239" width="15" height="14" fill="#c8642a" shape-rendering="crispEdges"/>
<rect x="77" y="239" width="14" height="13" fill="#e8b430" shape-rendering="crispEdges"/>
<rect x="78" y="240" width="13" height="12" fill="#f6d3b8" shape-rendering="crispEdges"/>
<rect x="78" y="240" width="12" height="1" fill="#fffbe8" shape-rendering="crispEdges"/>
<rect x="78" y="240" width="1" height="11" fill="#fffbe8" shape-rendering="crispEdges"/>
<rect x="81.5" y="242.5" width="6" height="7" fill="#f0f4ff" stroke="#6a80c0" stroke-width="1" shape-rendering="crispEdges"/>
<rect x="82" y="244" width="5" height="1" fill="#6a80c0" shape-rendering="crispEdges"/>
<rect x="82" y="246" width="5" height="1" fill="#6a80c0" shape-rendering="crispEdges"/>
<text x="98" y="250" font-size="12" fill="#111" textLength="110.6" lengthAdjust="spacingAndGlyphs">Organizational Model</text>
<path d="M57.5,262 L63,267 L57.5,272 Z" fill="#fff" stroke="#555" stroke-width="1" shape-rendering="auto"/>
<rect x="77" y="259" width="15" height="14" fill="#c8642a" shape-rendering="crispEdges"/>
<rect x="77" y="259" width="14" height="13" fill="#e8b430" shape-rendering="crispEdges"/>
<rect x="78" y="260" width="13" height="12" fill="#f6d3b8" shape-rendering="crispEdges"/>
<rect x="78" y="260" width="12" height="1" fill="#fffbe8" shape-rendering="crispEdges"/>
<rect x="78" y="260" width="1" height="11" fill="#fffbe8" shape-rendering="crispEdges"/>
<rect x="81.5" y="262.5" width="6" height="7" fill="#f0f4ff" stroke="#6a80c0" stroke-width="1" shape-rendering="crispEdges"/>
<rect x="82" y="264" width="5" height="1" fill="#6a80c0" shape-rendering="crispEdges"/>
<rect x="82" y="266" width="5" height="1" fill="#6a80c0" shape-rendering="crispEdges"/>
<text x="98" y="270" font-size="12" fill="#111" textLength="87.1" lengthAdjust="spacingAndGlyphs">Strategic Models</text>
<path d="M57.5,282 L63,287 L57.5,292 Z" fill="#fff" stroke="#555" stroke-width="1" shape-rendering="auto"/>
<rect x="77" y="279" width="15" height="14" fill="#c8642a" shape-rendering="crispEdges"/>
<rect x="77" y="279" width="14" height="13" fill="#e8b430" shape-rendering="crispEdges"/>
<rect x="78" y="280" width="13" height="12" fill="#f6d3b8" shape-rendering="crispEdges"/>
<rect x="78" y="280" width="12" height="1" fill="#fffbe8" shape-rendering="crispEdges"/>
<rect x="78" y="280" width="1" height="11" fill="#fffbe8" shape-rendering="crispEdges"/>
<rect x="81.5" y="282.5" width="6" height="7" fill="#f0f4ff" stroke="#6a80c0" stroke-width="1" shape-rendering="crispEdges"/>
<rect x="82" y="284" width="5" height="1" fill="#6a80c0" shape-rendering="crispEdges"/>
<rect x="82" y="286" width="5" height="1" fill="#6a80c0" shape-rendering="crispEdges"/>
<text x="98" y="290" font-size="12" fill="#111" textLength="145.7" lengthAdjust="spacingAndGlyphs">Systems Engineering Model</text>
<path d="M57.5,302 L63,307 L57.5,312 Z" fill="#fff" stroke="#555" stroke-width="1" shape-rendering="auto"/>
<rect x="77" y="299" width="15" height="14" fill="#c8642a" shape-rendering="crispEdges"/>
<rect x="77" y="299" width="14" height="13" fill="#e8b430" shape-rendering="crispEdges"/>
<rect x="78" y="300" width="13" height="12" fill="#f6d3b8" shape-rendering="crispEdges"/>
<rect x="78" y="300" width="12" height="1" fill="#fffbe8" shape-rendering="crispEdges"/>
<rect x="78" y="300" width="1" height="11" fill="#fffbe8" shape-rendering="crispEdges"/>
<rect x="81.5" y="302.5" width="6" height="7" fill="#f0f4ff" stroke="#6a80c0" stroke-width="1" shape-rendering="crispEdges"/>
<rect x="82" y="304" width="5" height="1" fill="#6a80c0" shape-rendering="crispEdges"/>
<rect x="82" y="306" width="5" height="1" fill="#6a80c0" shape-rendering="crispEdges"/>
<text x="98" y="310" font-size="12" fill="#111" textLength="28.6" lengthAdjust="spacingAndGlyphs">Temp</text>
<path d="M57.5,322 L63,327 L57.5,332 Z" fill="#fff" stroke="#555" stroke-width="1" shape-rendering="auto"/>
<rect x="77" y="319" width="15" height="14" fill="#c8642a" shape-rendering="crispEdges"/>
<rect x="77" y="319" width="14" height="13" fill="#e8b430" shape-rendering="crispEdges"/>
<rect x="78" y="320" width="13" height="12" fill="#f6d3b8" shape-rendering="crispEdges"/>
<rect x="78" y="320" width="12" height="1" fill="#fffbe8" shape-rendering="crispEdges"/>
<rect x="78" y="320" width="1" height="11" fill="#fffbe8" shape-rendering="crispEdges"/>
<rect x="81.5" y="322.5" width="6" height="7" fill="#f0f4ff" stroke="#6a80c0" stroke-width="1" shape-rendering="crispEdges"/>
<rect x="82" y="324" width="5" height="1" fill="#6a80c0" shape-rendering="crispEdges"/>
<rect x="82" y="326" width="5" height="1" fill="#6a80c0" shape-rendering="crispEdges"/>
<text x="98" y="330" font-size="12" fill="#111" textLength="112.5" lengthAdjust="spacingAndGlyphs">Business Architecture</text>
<path d="M57.5,342 L63,347 L57.5,352 Z" fill="#fff" stroke="#555" stroke-width="1" shape-rendering="auto"/>
<rect x="77" y="339" width="15" height="14" fill="#c8642a" shape-rendering="crispEdges"/>
<rect x="77" y="339" width="14" height="13" fill="#e8b430" shape-rendering="crispEdges"/>
<rect x="78" y="340" width="13" height="12" fill="#f6d3b8" shape-rendering="crispEdges"/>
<rect x="78" y="340" width="12" height="1" fill="#fffbe8" shape-rendering="crispEdges"/>
<rect x="78" y="340" width="1" height="11" fill="#fffbe8" shape-rendering="crispEdges"/>
<rect x="80" y="343" width="9" height="6" fill="#e04848" shape-rendering="crispEdges"/>
<rect x="81" y="344" width="2" height="4" fill="#fff" shape-rendering="crispEdges"/>
<rect x="84" y="344" width="4" height="2" fill="#ffd8d8" shape-rendering="crispEdges"/>
<rect x="80" y="349" width="9" height="1" fill="#606060" shape-rendering="crispEdges"/>
<text x="98" y="350" font-size="12" fill="#111" textLength="81.1" lengthAdjust="spacingAndGlyphs">ArchiMate View</text>
<path d="M57.5,362 L63,367 L57.5,372 Z" fill="#fff" stroke="#555" stroke-width="1" shape-rendering="auto"/>
<rect x="77" y="359" width="15" height="14" fill="#c8642a" shape-rendering="crispEdges"/>
<rect x="77" y="359" width="14" height="13" fill="#e8b430" shape-rendering="crispEdges"/>
<rect x="78" y="360" width="13" height="12" fill="#f6d3b8" shape-rendering="crispEdges"/>
<rect x="78" y="360" width="12" height="1" fill="#fffbe8" shape-rendering="crispEdges"/>
<rect x="78" y="360" width="1" height="11" fill="#fffbe8" shape-rendering="crispEdges"/>
<rect x="81.5" y="362.5" width="6" height="7" fill="#f0f4ff" stroke="#6a80c0" stroke-width="1" shape-rendering="crispEdges"/>
<rect x="82" y="364" width="5" height="1" fill="#6a80c0" shape-rendering="crispEdges"/>
<rect x="82" y="366" width="5" height="1" fill="#6a80c0" shape-rendering="crispEdges"/>
<text x="98" y="370" font-size="12" fill="#111" textLength="110.5" lengthAdjust="spacingAndGlyphs">Zachman Framework</text>
<path d="M57.5,382 L63,387 L57.5,392 Z" fill="#fff" stroke="#555" stroke-width="1" shape-rendering="auto"/>
<rect x="77" y="379" width="15" height="14" fill="#c8642a" shape-rendering="crispEdges"/>
<rect x="77" y="379" width="14" height="13" fill="#e8b430" shape-rendering="crispEdges"/>
<rect x="78" y="380" width="13" height="12" fill="#f6d3b8" shape-rendering="crispEdges"/>
<rect x="78" y="380" width="12" height="1" fill="#fffbe8" shape-rendering="crispEdges"/>
<rect x="78" y="380" width="1" height="11" fill="#fffbe8" shape-rendering="crispEdges"/>
<ellipse cx="84.5" cy="386" rx="4.5" ry="3" fill="#9aa8e8" stroke="#5a6ac0" stroke-width="0.8" shape-rendering="auto"/>
<text x="98" y="390" font-size="12" fill="#111" textLength="147.6" lengthAdjust="spacingAndGlyphs">Formal Requirements Model</text>
<path d="M57.5,402 L63,407 L57.5,412 Z" fill="#fff" stroke="#555" stroke-width="1" shape-rendering="auto"/>
<rect x="77" y="399" width="15" height="14" fill="#c8642a" shape-rendering="crispEdges"/>
<rect x="77" y="399" width="14" height="13" fill="#e8b430" shape-rendering="crispEdges"/>
<rect x="78" y="400" width="13" height="12" fill="#f6d3b8" shape-rendering="crispEdges"/>
<rect x="78" y="400" width="12" height="1" fill="#fffbe8" shape-rendering="crispEdges"/>
<rect x="78" y="400" width="1" height="11" fill="#fffbe8" shape-rendering="crispEdges"/>
<ellipse cx="84.5" cy="406" rx="4.5" ry="3" fill="#9aa8e8" stroke="#5a6ac0" stroke-width="0.8" shape-rendering="auto"/>
<text x="98" y="410" font-size="12" fill="#111" textLength="86.5" lengthAdjust="spacingAndGlyphs">Use Case Model</text>
<path d="M57.5,422 L63,427 L57.5,432 Z" fill="#fff" stroke="#555" stroke-width="1" shape-rendering="auto"/>
<rect x="77" y="419" width="15" height="14" fill="#c8642a" shape-rendering="crispEdges"/>
<rect x="77" y="419" width="14" height="13" fill="#e8b430" shape-rendering="crispEdges"/>
<rect x="78" y="420" width="13" height="12" fill="#f6d3b8" shape-rendering="crispEdges"/>
<rect x="78" y="420" width="12" height="1" fill="#fffbe8" shape-rendering="crispEdges"/>
<rect x="78" y="420" width="1" height="11" fill="#fffbe8" shape-rendering="crispEdges"/>
<rect x="80" y="423" width="9" height="6" fill="#e04848" shape-rendering="crispEdges"/>
<rect x="81" y="424" width="2" height="4" fill="#fff" shape-rendering="crispEdges"/>
<rect x="84" y="424" width="4" height="2" fill="#ffd8d8" shape-rendering="crispEdges"/>
<rect x="80" y="429" width="9" height="1" fill="#606060" shape-rendering="crispEdges"/>
<text x="98" y="430" font-size="12" fill="#111" textLength="94.5" lengthAdjust="spacingAndGlyphs">Traceability Model</text>
<path d="M57.5,442 L63,447 L57.5,452 Z" fill="#fff" stroke="#555" stroke-width="1" shape-rendering="auto"/>
<rect x="77" y="439" width="15" height="14" fill="#c8642a" shape-rendering="crispEdges"/>
<rect x="77" y="439" width="14" height="13" fill="#e8b430" shape-rendering="crispEdges"/>
<rect x="78" y="440" width="13" height="12" fill="#f6d3b8" shape-rendering="crispEdges"/>
<rect x="78" y="440" width="12" height="1" fill="#fffbe8" shape-rendering="crispEdges"/>
<rect x="78" y="440" width="1" height="11" fill="#fffbe8" shape-rendering="crispEdges"/>
<path d="M81.5,443 V450 M87.5,443 V450 M81.5,446.5 H87.5" fill="none" stroke="#707070" stroke-width="1"/>
<rect x="80" y="441" width="3" height="2" fill="#f0e040" stroke="#807020" stroke-width="0.5" shape-rendering="crispEdges"/>
<rect x="86" y="441" width="3" height="2" fill="#f0e040" stroke="#807020" stroke-width="0.5" shape-rendering="crispEdges"/>
<rect x="86.5" y="448.5" width="6" height="5" fill="#e02020" stroke="#401010" stroke-width="1" shape-rendering="crispEdges"/>
<path d="M87.5,452 L91,449.5" fill="none" stroke="#fff" stroke-width="1"/>
<text x="98" y="450" font-size="12" fill="#111" textLength="140.4" lengthAdjust="spacingAndGlyphs">Business Processes Model</text>
<path d="M57.5,462 L63,467 L57.5,472 Z" fill="#fff" stroke="#555" stroke-width="1" shape-rendering="auto"/>
<rect x="77" y="459" width="15" height="14" fill="#c8642a" shape-rendering="crispEdges"/>
<rect x="77" y="459" width="14" height="13" fill="#e8b430" shape-rendering="crispEdges"/>
<rect x="78" y="460" width="13" height="12" fill="#f6d3b8" shape-rendering="crispEdges"/>
<rect x="78" y="460" width="12" height="1" fill="#fffbe8" shape-rendering="crispEdges"/>
<rect x="78" y="460" width="1" height="11" fill="#fffbe8" shape-rendering="crispEdges"/>
<rect x="81.5" y="462.5" width="6" height="7" fill="#f0f4ff" stroke="#6a80c0" stroke-width="1" shape-rendering="crispEdges"/>
<rect x="82" y="464" width="5" height="1" fill="#6a80c0" shape-rendering="crispEdges"/>
<rect x="82" y="466" width="5" height="1" fill="#6a80c0" shape-rendering="crispEdges"/>
<rect x="86.5" y="468.5" width="6" height="5" fill="#e02020" stroke="#401010" stroke-width="1" shape-rendering="crispEdges"/>
<path d="M87.5,472 L91,469.5" fill="none" stroke="#fff" stroke-width="1"/>
<text x="98" y="470" font-size="12" fill="#111" textLength="107.1" lengthAdjust="spacingAndGlyphs">Web Services Model</text>
<path d="M57.5,482 L63,487 L57.5,492 Z" fill="#fff" stroke="#555" stroke-width="1" shape-rendering="auto"/>
<rect x="77" y="479" width="15" height="14" fill="#c8642a" shape-rendering="crispEdges"/>
<rect x="77" y="479" width="14" height="13" fill="#e8b430" shape-rendering="crispEdges"/>
<rect x="78" y="480" width="13" height="12" fill="#f6d3b8" shape-rendering="crispEdges"/>
<rect x="78" y="480" width="12" height="1" fill="#fffbe8" shape-rendering="crispEdges"/>
<rect x="78" y="480" width="1" height="11" fill="#fffbe8" shape-rendering="crispEdges"/>
<rect x="81.5" y="482.5" width="6" height="7" fill="#f0f4ff" stroke="#6a80c0" stroke-width="1" shape-rendering="crispEdges"/>
<rect x="82" y="484" width="5" height="1" fill="#6a80c0" shape-rendering="crispEdges"/>
<rect x="82" y="486" width="5" height="1" fill="#6a80c0" shape-rendering="crispEdges"/>
<text x="98" y="490" font-size="12" fill="#111" textLength="63.1" lengthAdjust="spacingAndGlyphs">Code Model</text>
<path d="M57.5,502 L63,507 L57.5,512 Z" fill="#fff" stroke="#555" stroke-width="1" shape-rendering="auto"/>
<rect x="77" y="499" width="15" height="14" fill="#c8642a" shape-rendering="crispEdges"/>
<rect x="77" y="499" width="14" height="13" fill="#e8b430" shape-rendering="crispEdges"/>
<rect x="78" y="500" width="13" height="12" fill="#f6d3b8" shape-rendering="crispEdges"/>
<rect x="78" y="500" width="12" height="1" fill="#fffbe8" shape-rendering="crispEdges"/>
<rect x="78" y="500" width="1" height="11" fill="#fffbe8" shape-rendering="crispEdges"/>
<rect x="81.5" y="502.5" width="6" height="7" fill="#f0f4ff" stroke="#6a80c0" stroke-width="1" shape-rendering="crispEdges"/>
<rect x="82" y="504" width="5" height="1" fill="#6a80c0" shape-rendering="crispEdges"/>
<rect x="82" y="506" width="5" height="1" fill="#6a80c0" shape-rendering="crispEdges"/>
<text x="98" y="510" font-size="12" fill="#111" textLength="96.2" lengthAdjust="spacingAndGlyphs">Persistance Model</text>
<path d="M63,521.5 L63,530.5 L54,530.5 Z" fill="#454545" shape-rendering="auto"/>
<rect x="77" y="519" width="15" height="14" fill="#c8642a" shape-rendering="crispEdges"/>
<rect x="77" y="519" width="14" height="13" fill="#e8b430" shape-rendering="crispEdges"/>
<rect x="78" y="520" width="13" height="12" fill="#f6d3b8" shape-rendering="crispEdges"/>
<rect x="78" y="520" width="12" height="1" fill="#fffbe8" shape-rendering="crispEdges"/>
<rect x="78" y="520" width="1" height="11" fill="#fffbe8" shape-rendering="crispEdges"/>
<rect x="81.5" y="522.5" width="6" height="7" fill="#f0f4ff" stroke="#6a80c0" stroke-width="1" shape-rendering="crispEdges"/>
<rect x="82" y="524" width="5" height="1" fill="#6a80c0" shape-rendering="crispEdges"/>
<rect x="82" y="526" width="5" height="1" fill="#6a80c0" shape-rendering="crispEdges"/>
<text x="98" y="530" font-size="12" fill="#111" textLength="85.2" lengthAdjust="spacingAndGlyphs">Interface Design</text>
<rect x="101.5" y="539.5" width="5" height="4" fill="#f8e070" stroke="#c02020" stroke-width="1" shape-rendering="crispEdges"/>
<rect x="108.5" y="544.5" width="6" height="3" fill="#f8e070" stroke="#c02020" stroke-width="1" shape-rendering="crispEdges"/>
<rect x="108.5" y="549.5" width="6" height="3" fill="#f8e070" stroke="#c02020" stroke-width="1" shape-rendering="crispEdges"/>
<path d="M103.5,544 V551 H108.5 M103.5,546 H108.5" fill="none" stroke="#333" stroke-width="1"/>
<text x="121" y="550" font-size="12" fill="#111" textLength="85.2" lengthAdjust="spacingAndGlyphs">Interface Design</text>
<path d="M86,561.5 L86,570.5 L77,570.5 Z" fill="#454545" shape-rendering="auto"/>
<path d="M100.5,571.5 V559.5 Q100.5,558.5 101.5,558.5 H106.5 L108,560.5 H114.5 V571.5 Z" fill="#f8d0b0" stroke="#c07030" stroke-width="1"/>
<path d="M100.5,571.5 V559.5 H106.5 L108,560.5 H114" fill="none" stroke="#e8b830" stroke-width="1"/>
<rect x="101" y="561" width="13" height="1" fill="#fff4e0" shape-rendering="crispEdges"/>
<text x="121" y="570" font-size="12" fill="#111" textLength="82.6" lengthAdjust="spacingAndGlyphs">Customer Login</text>
<rect x="124.5" y="579.5" width="6" height="6" fill="#e0e8ff" stroke="#3a48c0" stroke-width="1" shape-rendering="crispEdges"/>
<rect x="132.5" y="579.5" width="6" height="5" fill="#e0e8ff" stroke="#3a48c0" stroke-width="1" shape-rendering="crispEdges"/>
<rect x="132.5" y="587.5" width="6" height="6" fill="#e0e8ff" stroke="#3a48c0" stroke-width="1" shape-rendering="crispEdges"/>
<path d="M127.5,586 V590.5 H132.5 M131,582.5 H132.5" fill="none" stroke="#333" stroke-width="1"/>
<text x="144" y="590" font-size="12" fill="#111" textLength="82.6" lengthAdjust="spacingAndGlyphs">Customer Login</text>
<path d="M103.5,602 L109,607 L103.5,612 Z" fill="#fff" stroke="#555" stroke-width="1" shape-rendering="auto"/>
<path d="M123.5,611.5 V599.5 Q123.5,598.5 124.5,598.5 H129.5 L131,600.5 H137.5 V611.5 Z" fill="#f8d0b0" stroke="#c07030" stroke-width="1"/>
<path d="M123.5,611.5 V599.5 H129.5 L131,600.5 H137" fill="none" stroke="#e8b830" stroke-width="1"/>
<rect x="124" y="601" width="13" height="1" fill="#fff4e0" shape-rendering="crispEdges"/>
<text x="144" y="610" font-size="12" fill="#111" textLength="38.4" lengthAdjust="spacingAndGlyphs">Signals</text>
<path d="M103.5,622 L109,627 L103.5,632 Z" fill="#fff" stroke="#555" stroke-width="1" shape-rendering="auto"/>
<path d="M123.5,631.5 V619.5 Q123.5,618.5 124.5,618.5 H129.5 L131,620.5 H137.5 V631.5 Z" fill="#f8d0b0" stroke="#c07030" stroke-width="1"/>
<path d="M123.5,631.5 V619.5 H129.5 L131,620.5 H137" fill="none" stroke="#e8b830" stroke-width="1"/>
<rect x="124" y="621" width="13" height="1" fill="#fff4e0" shape-rendering="crispEdges"/>
<text x="144" y="630" font-size="12" fill="#111" textLength="42.5" lengthAdjust="spacingAndGlyphs">Triggers</text>
<path d="M103.5,642 L109,647 L103.5,652 Z" fill="#fff" stroke="#555" stroke-width="1" shape-rendering="auto"/>
<path d="M123.5,651.5 V639.5 Q123.5,638.5 124.5,638.5 H129.5 L131,640.5 H137.5 V651.5 Z" fill="#f8d0b0" stroke="#c07030" stroke-width="1"/>
<path d="M123.5,651.5 V639.5 H129.5 L131,640.5 H137" fill="none" stroke="#e8b830" stroke-width="1"/>
<rect x="124" y="641" width="13" height="1" fill="#fff4e0" shape-rendering="crispEdges"/>
<text x="144" y="650" font-size="12" fill="#111" textLength="73.5" lengthAdjust="spacingAndGlyphs">User Interface</text>
<path d="M109,661.5 L109,670.5 L100,670.5 Z" fill="#454545" shape-rendering="auto"/>
<rect x="125.5" y="658.5" width="11" height="14" fill="#d8ecff" stroke="#4a70c8" stroke-width="1" shape-rendering="crispEdges"/>
<rect x="126" y="659" width="10" height="3" fill="#fff" shape-rendering="crispEdges"/>
<rect x="127" y="663" width="8" height="1" fill="#e05050" shape-rendering="crispEdges"/>
<rect x="127" y="666" width="8" height="1" fill="#3a5a90" shape-rendering="crispEdges"/>
<rect x="127" y="669" width="8" height="1" fill="#3a5a90" shape-rendering="crispEdges"/>
<text x="144" y="670" font-size="12" fill="#111" textLength="50.7" lengthAdjust="spacingAndGlyphs">Customer</text>
<rect x="165" y="676" width="89" height="20" fill="#c5cfe0" shape-rendering="crispEdges"/>
<g shape-rendering="auto"><rect x="151.5" y="679.5" width="5" height="3" fill="none" stroke="#333" stroke-width="1"/><rect x="146.5" y="681.5" width="15" height="10" rx="1.5" fill="#f2e2dc" stroke="#333" stroke-width="1"/><path d="M151,685 H157 V689 M151,685 L157,689" stroke="#333" stroke-width="0.8" fill="none"/><circle cx="151" cy="685" r="1.9" fill="#f0e000" stroke="#555" stroke-width="0.6"/><circle cx="157" cy="685" r="1.9" fill="#f0e000" stroke="#555" stroke-width="0.6"/><circle cx="157" cy="689" r="1.9" fill="#f0e000" stroke="#555" stroke-width="0.6"/></g>
<text x="167" y="690" font-size="12" fill="#111" textLength="82.6" lengthAdjust="spacingAndGlyphs">Customer Login</text>
<rect x="146.5" y="701.5" width="14" height="9" rx="4.5" fill="#b8cdea" stroke="#3c4c70" stroke-width="1" shape-rendering="auto"/>
<rect x="149" y="703" width="8" height="2" fill="#e6eefa" shape-rendering="crispEdges"/>
<text x="167" y="710" font-size="12" fill="#111" textLength="65.7" lengthAdjust="spacingAndGlyphs">Downstream</text>
<rect x="146.5" y="721.5" width="14" height="9" rx="4.5" fill="#b8cdea" stroke="#3c4c70" stroke-width="1" shape-rendering="auto"/>
<rect x="149" y="723" width="8" height="2" fill="#e6eefa" shape-rendering="crispEdges"/>
<text x="167" y="730" font-size="12" fill="#111" textLength="77.4" lengthAdjust="spacingAndGlyphs">Evaluate Login</text>
<path d="M126.5,742 L132,747 L126.5,752 Z" fill="#fff" stroke="#555" stroke-width="1" shape-rendering="auto"/>
<rect x="146.5" y="741.5" width="14" height="9" rx="4.5" fill="#b8cdea" stroke="#3c4c70" stroke-width="1" shape-rendering="auto"/>
<rect x="149" y="743" width="8" height="2" fill="#e6eefa" shape-rendering="crispEdges"/>
<text x="167" y="750" font-size="12" fill="#111" textLength="18.9" lengthAdjust="spacingAndGlyphs">Fail</text>
<path d="M126.5,762 L132,767 L126.5,772 Z" fill="#fff" stroke="#555" stroke-width="1" shape-rendering="auto"/>
<rect x="146.5" y="761.5" width="14" height="9" rx="4.5" fill="#b8cdea" stroke="#3c4c70" stroke-width="1" shape-rendering="auto"/>
<rect x="149" y="763" width="8" height="2" fill="#e6eefa" shape-rendering="crispEdges"/>
<text x="167" y="770" font-size="12" fill="#111" textLength="28.6" lengthAdjust="spacingAndGlyphs">Login</text>
<rect x="146.5" y="781.5" width="14" height="9" rx="4.5" fill="#b8cdea" stroke="#3c4c70" stroke-width="1" shape-rendering="auto"/>
<rect x="149" y="783" width="8" height="2" fill="#e6eefa" shape-rendering="crispEdges"/>
<text x="167" y="790" font-size="12" fill="#111" textLength="33.6" lengthAdjust="spacingAndGlyphs">Offline</text>
<path d="M126.5,802 L132,807 L126.5,812 Z" fill="#fff" stroke="#555" stroke-width="1" shape-rendering="auto"/>
<rect x="146.5" y="801.5" width="14" height="9" rx="4.5" fill="#b8cdea" stroke="#3c4c70" stroke-width="1" shape-rendering="auto"/>
<rect x="149" y="803" width="8" height="2" fill="#e6eefa" shape-rendering="crispEdges"/>
<text x="167" y="810" font-size="12" fill="#111" textLength="33.8" lengthAdjust="spacingAndGlyphs">Online</text>
<path d="M153.5,818.5 L160.5,825.5 L153.5,832.5 L146.5,825.5 Z" fill="#48d0d8" stroke="#1a6a78" stroke-width="1" shape-rendering="auto"/>
<path d="M153.5,821 L157,825 L153.5,825 Z" fill="#a0f0f4" shape-rendering="auto"/>
<text x="167" y="830" font-size="12" fill="#111" textLength="36.4" lengthAdjust="spacingAndGlyphs">Choice</text>
<path d="M153.5,838.5 L160.5,845.5 L153.5,852.5 L146.5,845.5 Z" fill="#48d0d8" stroke="#1a6a78" stroke-width="1" shape-rendering="auto"/>
<path d="M153.5,841 L157,845 L153.5,845 Z" fill="#a0f0f4" shape-rendering="auto"/>
<text x="167" y="850" font-size="12" fill="#111" textLength="36.4" lengthAdjust="spacingAndGlyphs">Choice</text>
<circle cx="154" cy="866" r="5.5" fill="#ccc" stroke="#333" stroke-width="1.3" shape-rendering="auto"/>
<circle cx="154" cy="866" r="2.8" fill="#222" shape-rendering="auto"/>
<text x="167" y="870" font-size="12" fill="#111" textLength="25.4" lengthAdjust="spacingAndGlyphs">Final</text>
<circle cx="154" cy="886" r="5.8" fill="#333" stroke="#222" stroke-width="1" shape-rendering="auto"/>
<circle cx="152.5" cy="884.5" r="1.5" fill="#777" shape-rendering="auto"/>
<text x="167" y="890" font-size="12" fill="#111" textLength="27.3" lengthAdjust="spacingAndGlyphs">Initial</text>
<path d="M146.5,901.5 h11 l4,4 l-4,4 h-11 Z" fill="#84c8ec" stroke="#6a68d0" stroke-width="1" shape-rendering="auto"/>
<path d="M147,902 h5 l-5,7 Z" fill="#e0f2fc" shape-rendering="auto"/>
<path d="M153,909 l7,-6 l1.2,2.5 l-3.8,3.5 Z" fill="#5a9ec8" shape-rendering="auto"/>
<path d="M146.5,901.5 h11 l4,4 l-4,4 h-11 Z" fill="none" stroke="#6a68d0" stroke-width="1" shape-rendering="auto"/>
<text x="167" y="910" font-size="12" fill="#111" textLength="15.0" lengthAdjust="spacingAndGlyphs">No</text>
<path d="M146.5,921.5 h11 l4,4 l-4,4 h-11 Z" fill="#84c8ec" stroke="#6a68d0" stroke-width="1" shape-rendering="auto"/>
<path d="M147,922 h5 l-5,7 Z" fill="#e0f2fc" shape-rendering="auto"/>
<path d="M153,929 l7,-6 l1.2,2.5 l-3.8,3.5 Z" fill="#5a9ec8" shape-rendering="auto"/>
<path d="M146.5,921.5 h11 l4,4 l-4,4 h-11 Z" fill="none" stroke="#6a68d0" stroke-width="1" shape-rendering="auto"/>
<text x="167" y="930" font-size="12" fill="#111" textLength="14.9" lengthAdjust="spacingAndGlyphs">Ok</text>
<path d="M146.5,941.5 h11 l4,4 l-4,4 h-11 Z" fill="#84c8ec" stroke="#6a68d0" stroke-width="1" shape-rendering="auto"/>
<path d="M147,942 h5 l-5,7 Z" fill="#e0f2fc" shape-rendering="auto"/>
<path d="M153,949 l7,-6 l1.2,2.5 l-3.8,3.5 Z" fill="#5a9ec8" shape-rendering="auto"/>
<path d="M146.5,941.5 h11 l4,4 l-4,4 h-11 Z" fill="none" stroke="#6a68d0" stroke-width="1" shape-rendering="auto"/>
<text x="167" y="950" font-size="12" fill="#111" textLength="19.1" lengthAdjust="spacingAndGlyphs">Yes</text>
<path d="M57.5,962 L63,967 L57.5,972 Z" fill="#fff" stroke="#555" stroke-width="1" shape-rendering="auto"/>
<rect x="77" y="959" width="15" height="14" fill="#c8642a" shape-rendering="crispEdges"/>
<rect x="77" y="959" width="14" height="13" fill="#e8b430" shape-rendering="crispEdges"/>
<rect x="78" y="960" width="13" height="12" fill="#f6d3b8" shape-rendering="crispEdges"/>
<rect x="78" y="960" width="12" height="1" fill="#fffbe8" shape-rendering="crispEdges"/>
<rect x="78" y="960" width="1" height="11" fill="#fffbe8" shape-rendering="crispEdges"/>
<rect x="81.5" y="962.5" width="7" height="7" fill="#f0c0f0" stroke="#a040a0" stroke-width="1" shape-rendering="crispEdges"/>
<rect x="80" y="964" width="3" height="1" fill="#a040a0" shape-rendering="crispEdges"/>
<rect x="80" y="967" width="3" height="1" fill="#a040a0" shape-rendering="crispEdges"/>
<text x="98" y="970" font-size="12" fill="#111" textLength="66.3" lengthAdjust="spacingAndGlyphs">Components</text>
<path d="M57.5,982 L63,987 L57.5,992 Z" fill="#fff" stroke="#555" stroke-width="1" shape-rendering="auto"/>
<rect x="77" y="979" width="15" height="14" fill="#c8642a" shape-rendering="crispEdges"/>
<rect x="77" y="979" width="14" height="13" fill="#e8b430" shape-rendering="crispEdges"/>
<rect x="78" y="980" width="13" height="12" fill="#f6d3b8" shape-rendering="crispEdges"/>
<rect x="78" y="980" width="12" height="1" fill="#fffbe8" shape-rendering="crispEdges"/>
<rect x="78" y="980" width="1" height="11" fill="#fffbe8" shape-rendering="crispEdges"/>
<rect x="81.5" y="982.5" width="6" height="7" fill="#f0f4ff" stroke="#6a80c0" stroke-width="1" shape-rendering="crispEdges"/>
<rect x="82" y="984" width="5" height="1" fill="#6a80c0" shape-rendering="crispEdges"/>
<rect x="82" y="986" width="5" height="1" fill="#6a80c0" shape-rendering="crispEdges"/>
<text x="98" y="990" font-size="12" fill="#111" textLength="52.0" lengthAdjust="spacingAndGlyphs">AltImages</text>
<path d="M57.5,1002 L63,1007 L57.5,1012 Z" fill="#fff" stroke="#555" stroke-width="1" shape-rendering="auto"/>
<rect x="77" y="999" width="15" height="14" fill="#c8642a" shape-rendering="crispEdges"/>
<rect x="77" y="999" width="14" height="13" fill="#e8b430" shape-rendering="crispEdges"/>
<rect x="78" y="1000" width="13" height="12" fill="#f6d3b8" shape-rendering="crispEdges"/>
<rect x="78" y="1000" width="12" height="1" fill="#fffbe8" shape-rendering="crispEdges"/>
<rect x="78" y="1000" width="1" height="11" fill="#fffbe8" shape-rendering="crispEdges"/>
<rect x="81.5" y="1002.5" width="6" height="7" fill="#f0f4ff" stroke="#6a80c0" stroke-width="1" shape-rendering="crispEdges"/>
<rect x="82" y="1004" width="5" height="1" fill="#6a80c0" shape-rendering="crispEdges"/>
<rect x="82" y="1006" width="5" height="1" fill="#6a80c0" shape-rendering="crispEdges"/>
<text x="98" y="1010" font-size="12" fill="#111" textLength="62.4" lengthAdjust="spacingAndGlyphs">Deployment</text>
</g></svg>
<g shape-rendering="auto">
<text x="434" y="184" font-size="32" fill="#000080" textLength="225" lengthAdjust="spacingAndGlyphs" stroke="#fff" stroke-width="0.7">Customer Login</text>
<text x="503" y="240.5" font-size="10" fill="#000" textLength="313" lengthAdjust="spacingAndGlyphs">This diagram provides examples for parameterized triggers and defining</text>
<text x="503" y="252.5" font-size="10" fill="#000" textLength="68" lengthAdjust="spacingAndGlyphs">a user interface.</text>
<text x="468.25" y="320" font-size="10.5" fill="#000" textLength="26" lengthAdjust="spacingAndGlyphs">Initial</text>
<circle cx="482.5" cy="347.5" r="10.5" fill="#000"/>
<path d="M493,347.5 L559,347.5" fill="none" stroke="#000" stroke-width="1.0"/>
<path d="M546.00,352.50 L559.00,347.50 L546.00,342.50" fill="none" stroke="#000" stroke-width="1"/>
<text x="453.25" y="375" font-size="10.5" fill="#000" textLength="94" lengthAdjust="spacingAndGlyphs">/sim.LoginCount =0;</text>
<path d="M441.5,404.5 h136.4 l12,12 v163.2 h-148.4 Z" transform="translate(2,2)" fill="#000" opacity="0.12"/>
<path d="M439.5,402.5 H575.9 L587.9,414.5 V577.7 H439.5 Z" fill="#fff" stroke="#000" stroke-width="1"/>
<path d="M575.9,402.5 V414.5 H587.9 Z" fill="#e6e6e6" stroke="#000" stroke-width="0.8"/>
<text x="444.4" y="426" font-size="10" fill="#000" xml:space="preserve" textLength="135" lengthAdjust="spacingAndGlyphs">The <tspan font-weight="bold">Login</tspan> state shows a dialog</text>
<text x="444.4" y="438" font-size="10" fill="#000" xml:space="preserve" textLength="125.8" lengthAdjust="spacingAndGlyphs">on entry and hides it on exit.</text>
<text x="444.4" y="462" font-size="10" fill="#000" xml:space="preserve" textLength="118.3" lengthAdjust="spacingAndGlyphs">A static text box is updated</text>
<text x="444.4" y="474" font-size="10" fill="#000" xml:space="preserve" textLength="133.7" lengthAdjust="spacingAndGlyphs">each time to provide feedback</text>
<text x="444.4" y="486" font-size="10" fill="#000" xml:space="preserve" textLength="87.8" lengthAdjust="spacingAndGlyphs">from the simulation.</text>
<text x="444.4" y="510" font-size="10" fill="#000" xml:space="preserve" textLength="113.3" lengthAdjust="spacingAndGlyphs">The button on that dialog</text>
<text x="444.4" y="522" font-size="10" fill="#000" xml:space="preserve" textLength="121.3" lengthAdjust="spacingAndGlyphs">sends the <tspan font-weight="bold">Login</tspan> signal, with</text>
<text x="444.4" y="534" font-size="10" fill="#000" xml:space="preserve" textLength="110.5" lengthAdjust="spacingAndGlyphs">arguments filled from the</text>
<text x="444.4" y="546" font-size="10" fill="#000" xml:space="preserve" textLength="69.7" lengthAdjust="spacingAndGlyphs">dialog contents.</text>
<path d="M643.6,404.5 h157 l12,12 v150.5 h-169 Z" transform="translate(2,2)" fill="#000" opacity="0.12"/>
<path d="M641.6,402.5 H798.6 L810.6,414.5 V565.0 H641.6 Z" fill="#fff" stroke="#000" stroke-width="1"/>
<path d="M798.6,402.5 V414.5 H810.6 Z" fill="#e6e6e6" stroke="#000" stroke-width="0.8"/>
<text x="646.2" y="426" font-size="10" fill="#000" xml:space="preserve" textLength="152.3" lengthAdjust="spacingAndGlyphs">This transition can also be followed</text>
<text x="646.2" y="438" font-size="10" fill="#000" xml:space="preserve" textLength="154.7" lengthAdjust="spacingAndGlyphs">without using the dialog by double</text>
<text x="646.2" y="450" font-size="10" fill="#000" xml:space="preserve" textLength="153.9" lengthAdjust="spacingAndGlyphs">clicking on the Login Trigger in the</text>
<text x="646.2" y="462" font-size="10" fill="#000" xml:space="preserve" textLength="122.1" lengthAdjust="spacingAndGlyphs"><tspan font-weight="bold">Simulation Events</tspan> window.</text>
<text x="646.2" y="486" font-size="10" fill="#000" xml:space="preserve" textLength="142.9" lengthAdjust="spacingAndGlyphs">You will be prompted to provide</text>
<text x="646.2" y="498" font-size="10" fill="#000" xml:space="preserve" textLength="140.5" lengthAdjust="spacingAndGlyphs">values for the parameters. When</text>
<text x="646.2" y="510" font-size="10" fill="#000" xml:space="preserve" textLength="154.7" lengthAdjust="spacingAndGlyphs">entering strings, surround the value</text>
<text x="646.2" y="522" font-size="10" fill="#000" xml:space="preserve" textLength="134.7" lengthAdjust="spacingAndGlyphs">in quotes so the engine knows</text>
<text x="646.2" y="534" font-size="10" fill="#000" xml:space="preserve" textLength="102.7" lengthAdjust="spacingAndGlyphs">you're entering a string.</text>
<path d="M835.6,404.5 h73.3 l12,12 v135.3 h-85.3 Z" transform="translate(2,2)" fill="#000" opacity="0.12"/>
<path d="M833.6,402.5 H906.9 L918.9,414.5 V549.8 H833.6 Z" fill="#fff" stroke="#000" stroke-width="1"/>
<path d="M906.9,402.5 V414.5 H918.9 Z" fill="#e6e6e6" stroke="#000" stroke-width="0.8"/>
<text x="838.1" y="426" font-size="10" fill="#000" xml:space="preserve" textLength="57.8" lengthAdjust="spacingAndGlyphs">The <tspan font-weight="bold">Fail</tspan> state</text>
<text x="838.1" y="438" font-size="10" fill="#000" xml:space="preserve" textLength="71.9" lengthAdjust="spacingAndGlyphs">traces the values</text>
<text x="838.1" y="450" font-size="10" fill="#000" xml:space="preserve" textLength="72.1" lengthAdjust="spacingAndGlyphs">that were passed</text>
<text x="838.1" y="462" font-size="10" fill="#000" xml:space="preserve" textLength="62.8" lengthAdjust="spacingAndGlyphs">with the Login</text>
<text x="838.1" y="474" font-size="10" fill="#000" xml:space="preserve" textLength="72.6" lengthAdjust="spacingAndGlyphs">signal, regardless</text>
<text x="838.1" y="486" font-size="10" fill="#000" xml:space="preserve" textLength="62.1" lengthAdjust="spacingAndGlyphs">of if they were</text>
<text x="838.1" y="498" font-size="10" fill="#000" xml:space="preserve" textLength="71.1" lengthAdjust="spacingAndGlyphs">from a dialog or</text>
<text x="838.1" y="510" font-size="10" fill="#000" xml:space="preserve" textLength="67.7" lengthAdjust="spacingAndGlyphs">the <tspan font-weight="bold">Simulation</tspan></text>
<text x="838.1" y="522" font-size="10" fill="#000" xml:space="preserve" textLength="68" lengthAdjust="spacingAndGlyphs"><tspan font-weight="bold">Events</tspan> window.</text>
<path d="M861.2,204.9 h122.4 l12,12 v85.6 h-134.4 Z" transform="translate(2,2)" fill="#000" opacity="0.12"/>
<path d="M859.2,202.9 H981.6 L993.6,214.9 V300.5 H859.2 Z" fill="#fff" stroke="#000" stroke-width="1"/>
<path d="M981.6,202.9 V214.9 H993.6 Z" fill="#e6e6e6" stroke="#000" stroke-width="0.8"/>
<text x="864.2" y="227" font-size="10" fill="#000" xml:space="preserve" textLength="100.8" lengthAdjust="spacingAndGlyphs">This <tspan font-weight="bold">Choice</tspan> checks the</text>
<text x="864.2" y="239" font-size="10" fill="#000" xml:space="preserve" textLength="104.8" lengthAdjust="spacingAndGlyphs">values contained by the</text>
<text x="864.2" y="251" font-size="10" fill="#000" xml:space="preserve" textLength="109.8" lengthAdjust="spacingAndGlyphs">signal and the simulation</text>
<text x="864.2" y="263" font-size="10" fill="#000" xml:space="preserve" textLength="122.6" lengthAdjust="spacingAndGlyphs">follows the appropriate path</text>
<text x="864.2" y="275" font-size="10" fill="#000" xml:space="preserve" textLength="109.8" lengthAdjust="spacingAndGlyphs">depending on the values</text>
<text x="864.2" y="287" font-size="10" fill="#000" xml:space="preserve" textLength="34.8" lengthAdjust="spacingAndGlyphs">entered.</text>
<path d="M576.5,402.5 L593.3,382" fill="none" stroke="#000" stroke-width="1" stroke-dasharray="3,3"/>
<path d="M719,349 L720.1,402.5" fill="none" stroke="#000" stroke-width="1" stroke-dasharray="3,3"/>
<path d="M919.5,300.5 L919.5,319 L983,346" fill="none" stroke="#000" stroke-width="1" stroke-dasharray="3,3"/>
<path d="M918.9,467 L939.6,463.5" fill="none" stroke="#000" stroke-width="1" stroke-dasharray="3,3"/>
<rect x="561.5" y="315.5" width="120" height="69" rx="17" fill="#000" opacity="0.13"/>
<rect x="559" y="313" width="120" height="69" rx="17" fill="url(#stateG)" stroke="#000" stroke-width="1.2"/>
<line x1="559" y1="334.5" x2="679" y2="334.5" stroke="#000" stroke-width="1.2"/>
<text x="619" y="326" font-size="10" fill="#000" font-weight="bold" text-anchor="middle" textLength="26.4" lengthAdjust="spacingAndGlyphs">Login</text>
<text x="564.2" y="348" font-size="10.4" fill="#2a2a2a" textLength="85.5" lengthAdjust="spacingAndGlyphs">entry / showDialog</text>
<text x="564.2" y="361" font-size="10.4" fill="#2a2a2a" textLength="74.0" lengthAdjust="spacingAndGlyphs">exit / hideDialog</text>
<rect x="760.75" y="317.5" width="119.25" height="59.5" rx="17" fill="#000" opacity="0.13"/>
<rect x="758.25" y="315" width="119.25" height="59.5" rx="17" fill="url(#stateG)" stroke="#000" stroke-width="1.2"/>
<text x="818" y="328" font-size="10" fill="#000" font-weight="bold" text-anchor="middle" textLength="72.5" lengthAdjust="spacingAndGlyphs">Evaluate Login</text>
<rect x="1131.8" y="315.9" width="133.2" height="68.3" rx="17" fill="#000" opacity="0.13"/>
<rect x="1129.3" y="313.4" width="133.2" height="68.3" rx="17" fill="url(#stateG)" stroke="#000" stroke-width="1.2"/>
<line x1="1129.3" y1="334" x2="1262.5" y2="334" stroke="#000" stroke-width="1.2"/>
<text x="1196" y="326.3" font-size="10" fill="#000" font-weight="bold" text-anchor="middle" textLength="30.7" lengthAdjust="spacingAndGlyphs">Online</text>
<text x="1134.2" y="348" font-size="10.4" fill="#2a2a2a" textLength="85.5" lengthAdjust="spacingAndGlyphs">entry / showDialog</text>
<rect x="942.1" y="425.9" width="118.5" height="58.8" rx="17" fill="#000" opacity="0.13"/>
<rect x="939.6" y="423.4" width="118.5" height="58.8" rx="17" fill="url(#stateG)" stroke="#000" stroke-width="1.2"/>
<line x1="939.6" y1="444" x2="1058.1" y2="444" stroke="#000" stroke-width="1.2"/>
<text x="998.7" y="436" font-size="10" fill="#000" font-weight="bold" text-anchor="middle" textLength="18" lengthAdjust="spacingAndGlyphs">Fail</text>
<text x="944.2" y="457.8" font-size="10.4" fill="#2a2a2a" textLength="70.5" lengthAdjust="spacingAndGlyphs">entry / OnEnter</text>
<rect x="1131.8" y="425.9" width="128.9" height="68.8" rx="17" fill="#000" opacity="0.13"/>
<rect x="1129.3" y="423.4" width="128.9" height="68.8" rx="17" fill="url(#stateG)" stroke="#000" stroke-width="1.2"/>
<text x="1194" y="436" font-size="10" fill="#000" font-weight="bold" text-anchor="middle" textLength="61" lengthAdjust="spacingAndGlyphs">Downstream</text>
<rect x="1061.7" y="645.8" width="119.1" height="59.1" rx="17" fill="#000" opacity="0.13"/>
<rect x="1059.2" y="643.3" width="119.1" height="59.1" rx="17" fill="url(#stateG)" stroke="#000" stroke-width="1.2"/>
<text x="1118.7" y="656.3" font-size="10" fill="#000" font-weight="bold" text-anchor="middle" textLength="31.3" lengthAdjust="spacingAndGlyphs">Offline</text>
<path d="M679,346.5 L758,345.5" fill="none" stroke="#000" stroke-width="1.0"/>
<path d="M745.06,350.66 L758.00,345.50 L744.94,340.66" fill="none" stroke="#000" stroke-width="1"/>
<text x="699.25" y="337" font-size="10.5" fill="#000" textLength="26" lengthAdjust="spacingAndGlyphs">Login</text>
<path d="M877.5,346.2 L983.5,346.7" fill="none" stroke="#000" stroke-width="1.0"/>
<path d="M970.48,351.64 L983.50,346.70 L970.52,341.64" fill="none" stroke="#000" stroke-width="1"/>
<path d="M1009.3,346.7 L1129.3,346.7" fill="none" stroke="#000" stroke-width="1.0"/>
<path d="M1116.30,351.70 L1129.30,346.70 L1116.30,341.70" fill="none" stroke="#000" stroke-width="1"/>
<path d="M996.4,363.6 L998.2,423" fill="none" stroke="#000" stroke-width="1.0"/>
<path d="M992.81,410.16 L998.20,423.00 L1002.80,409.85" fill="none" stroke="#000" stroke-width="1"/>
<path d="M1198.2,381.7 L1198.2,423" fill="none" stroke="#000" stroke-width="1.0"/>
<path d="M1193.20,410.00 L1198.20,423.00 L1203.20,410.00" fill="none" stroke="#000" stroke-width="1"/>
<text x="1207.4" y="401.8" font-size="10.5" fill="#000" textLength="12" lengthAdjust="spacingAndGlyphs">Ok</text>
<text x="1004.2" y="374.6" font-size="10.5" fill="#000" textLength="32" lengthAdjust="spacingAndGlyphs">Choice</text>
<text x="1002.2" y="299" font-size="10.5" fill="#000" textLength="129.7" lengthAdjust="spacingAndGlyphs">[this.Login.Name=='Joe' &amp;&amp;</text>
<text x="1002.2" y="312" font-size="10.5" fill="#000" textLength="137.8" lengthAdjust="spacingAndGlyphs">this.Login.Password=='secret']</text>
<path d="M979.9,610.5 H618.5 V382.5" fill="none" stroke="#000" stroke-width="1"/>
<path d="M623.50,395.50 L618.50,382.50 L613.50,395.50" fill="none" stroke="#000" stroke-width="1"/>
<path d="M992,482.2 L992,593.6" fill="none" stroke="#000" stroke-width="1.0"/>
<path d="M987.00,580.60 L992.00,593.60 L997.00,580.60" fill="none" stroke="#000" stroke-width="1"/>
<text x="950" y="601.2" font-size="10.5" fill="#000" textLength="32" lengthAdjust="spacingAndGlyphs">Choice</text>
<path d="M992.6,627.2 L992.6,680 L1059.2,680" fill="none" stroke="#000" stroke-width="1.0"/>
<path d="M1046.20,685.00 L1059.20,680.00 L1046.20,675.00" fill="none" stroke="#000" stroke-width="1"/>
<text x="905.1" y="694.4" font-size="10.5" fill="#000" textLength="95" lengthAdjust="spacingAndGlyphs">[sim.LoginCount&gt;3;]</text>
<path d="M1178.3,672.9 L1209.2,673" fill="none" stroke="#000" stroke-width="1.0"/>
<path d="M1196.18,677.96 L1209.20,673.00 L1196.22,667.96" fill="none" stroke="#000" stroke-width="1"/>
<path d="M1218.6,492.2 L1218.6,663" fill="none" stroke="#000" stroke-width="1.0"/>
<path d="M1213.60,650.00 L1218.60,663.00 L1223.60,650.00" fill="none" stroke="#000" stroke-width="1"/>
<text x="1205.2" y="697.5" font-size="10.5" fill="#000" textLength="23.3" lengthAdjust="spacingAndGlyphs">Final</text>
<path d="M996.4,329.7 L1009.4,346.7 L996.4,363.7 L983.4,346.7 Z" fill="url(#diamG)" stroke="#222" stroke-width="1"/>
<path d="M992.6,593.6 L1005.35,610.4 L992.6,627.1999999999999 L979.85,610.4 Z" fill="url(#diamG)" stroke="#222" stroke-width="1"/>
<circle cx="1219.5" cy="673.3" r="10" fill="url(#finalG)" stroke="#000" stroke-width="1.2"/>
<circle cx="1219.5" cy="673.3" r="5" fill="#000"/>
<rect x="439.5" y="734.5" width="15" height="15" fill="#f8d860" stroke="#d07020" stroke-width="1" shape-rendering="crispEdges"/>
<rect x="442" y="737" width="10" height="10" fill="#c8d8ff" stroke="#3050c0" stroke-width="0.8" shape-rendering="crispEdges"/>
<path d="M444,740 h6 M444,743 h6 M447,740 v6" fill="none" stroke="#3050c0" stroke-width="0.8"/>
<text x="463.9" y="748" font-size="10" fill="#000" textLength="169" lengthAdjust="spacingAndGlyphs">User Interface : Customer Login Dialog</text>
</g>
<rect x="1264" y="571" width="608" height="441" fill="#40547a" shape-rendering="crispEdges"/>
<rect x="1264" y="571" width="608" height="22" fill="url(#dlgTitleG)" shape-rendering="crispEdges"/>
<text x="1270.25" y="588" font-size="11" fill="#fff" font-weight="bold" textLength="120" lengthAdjust="spacingAndGlyphs">Customer Login Dialog</text>
<rect x="1837.5" y="578.5" width="9" height="8" fill="none" stroke="#fff" stroke-width="1" shape-rendering="crispEdges"/>
<rect x="1837.5" y="578.5" width="9" height="2" fill="#fff" shape-rendering="crispEdges"/>
<path d="M1855.5,578.5 L1863.5,586.5 M1863.5,578.5 L1855.5,586.5" fill="none" stroke="#fff" stroke-width="1.3"/>
<rect x="1268" y="593" width="600" height="23" fill="#bcc8da" shape-rendering="crispEdges"/>
<rect x="1287.5" y="597.5" width="5" height="4" fill="#f8e060" stroke="#c02020" stroke-width="1" shape-rendering="crispEdges"/>
<rect x="1293.5" y="602.5" width="6" height="4" fill="#f8e060" stroke="#c02020" stroke-width="1" shape-rendering="crispEdges"/>
<rect x="1293.5" y="607.5" width="6" height="4" fill="#f8e060" stroke="#c02020" stroke-width="1" shape-rendering="crispEdges"/>
<path d="M1289.5,601.5 V609.5 H1293.5 M1289.5,604.5 H1293.5" fill="none" stroke="#333" stroke-width="1"/>
<text x="1302" y="607.5" font-size="12" fill="#8a8274" textLength="265" lengthAdjust="spacingAndGlyphs">Win32 User Interface Diagram: "Customer Login Dialog"</text>
<rect x="1268" y="616" width="600" height="391" fill="#fff" shape-rendering="crispEdges"/>
<rect x="1852" y="616" width="16" height="377" fill="#efefef" shape-rendering="crispEdges"/>
<rect x="1852" y="616" width="1" height="377" fill="#e2e2e2" shape-rendering="crispEdges"/>
<path d="M1856,626 L1864,626 L1860,622 Z" fill="#333"/>
<path d="M1856,981 L1864,981 L1860,985 Z" fill="#333"/>
<rect x="1853.5" y="634.5" width="13" height="106" fill="url(#thumbV)" stroke="#a8a8a8" stroke-width="1" rx="2"/>
<rect x="1857" y="683" width="6" height="1" fill="#777" shape-rendering="crispEdges"/>
<rect x="1857" y="686" width="6" height="1" fill="#777" shape-rendering="crispEdges"/>
<rect x="1857" y="689" width="6" height="1" fill="#777" shape-rendering="crispEdges"/>
<rect x="1268" y="993" width="584" height="14" fill="#efefef" shape-rendering="crispEdges"/>
<rect x="1268" y="993" width="600" height="1" fill="#e2e2e2" shape-rendering="crispEdges"/>
<path d="M1278,996 L1278,1004 L1274,1000 Z" fill="#333"/>
<path d="M1840,996 L1840,1004 L1844,1000 Z" fill="#333"/>
<rect x="1286.5" y="993.5" width="385" height="13" fill="url(#thumbH)" stroke="#a8a8a8" stroke-width="1" rx="2"/>
<rect x="1475" y="997" width="1" height="6" fill="#777" shape-rendering="crispEdges"/>
<rect x="1478" y="997" width="1" height="6" fill="#777" shape-rendering="crispEdges"/>
<rect x="1481" y="997" width="1" height="6" fill="#777" shape-rendering="crispEdges"/>
<rect x="1852" y="993" width="16" height="14" fill="#efefef" shape-rendering="crispEdges"/>
<g shape-rendering="auto">
<rect x="1289" y="643" width="314" height="344" rx="3" fill="#9cb5d5"/>
<rect x="1289.5" y="643.5" width="313" height="343" rx="3" fill="none" stroke="#86a4c8" stroke-width="1"/>
<rect x="1292" y="670" width="308" height="314" rx="3" fill="#f0f0f0"/>
<rect x="1292.5" y="670.5" width="307" height="313" rx="3" fill="none" stroke="#dfe6ef" stroke-width="1"/>
<rect x="1293.5" y="652.5" width="13" height="11" fill="#fff" stroke="#1a2aa0" stroke-width="1.2" shape-rendering="crispEdges"/>
<path d="M1298,653 V663 M1294,657 H1298" fill="none" stroke="#4a6ad0" stroke-width="1"/>
<path d="M1306,654 L1300,663 H1306 Z" fill="#b8c4f0"/>
<text x="1312.5" y="661.5" font-size="12" fill="#111" textLength="25" lengthAdjust="spacingAndGlyphs">Login</text>
<rect x="1580.5" y="648.5" width="19" height="19" rx="2" fill="url(#closeRed)" stroke="#6a2010" stroke-width="1"/>
<path d="M1585,653 L1595,663 M1595,653 L1585,663" fill="none" stroke="#fff" stroke-width="2.2"/>
<rect x="1636.7" y="649.3" width="207.6" height="130" rx="3" fill="#9cb5d5"/>
<rect x="1637.2" y="649.8" width="206.6" height="129" rx="3" fill="none" stroke="#86a4c8" stroke-width="1"/>
<rect x="1639.7" y="676.3" width="201.6" height="100" rx="3" fill="#f0f0f0"/>
<rect x="1640.2" y="676.8" width="200.6" height="99" rx="3" fill="none" stroke="#dfe6ef" stroke-width="1"/>
<rect x="1641.2" y="658.8" width="13" height="11" fill="#fff" stroke="#1a2aa0" stroke-width="1.2" shape-rendering="crispEdges"/>
<path d="M1645.7,659.3 V669.3 M1641.7,663.3 H1645.7" fill="none" stroke="#4a6ad0" stroke-width="1"/>
<path d="M1653.7,660.3 L1647.7,669.3 H1653.7 Z" fill="#b8c4f0"/>
<text x="1660.2" y="667.8" font-size="12" fill="#111" textLength="40.3" lengthAdjust="spacingAndGlyphs">Success</text>
<rect x="1821.8" y="654.8" width="19" height="19" rx="2" fill="url(#closeRed)" stroke="#6a2010" stroke-width="1"/>
<path d="M1826.3,659.3 L1836.3,669.3 M1836.3,659.3 L1826.3,669.3" fill="none" stroke="#fff" stroke-width="2.2"/>
<text x="1312.3" y="690" font-size="11" fill="#111" textLength="245" lengthAdjust="spacingAndGlyphs">Dialogs modeled in the package being simulated are</text>
<text x="1312.3" y="703" font-size="11" fill="#111" textLength="262.5" lengthAdjust="spacingAndGlyphs">available to be used by the simulation. Each control can</text>
<text x="1312.3" y="716" font-size="11" fill="#111" textLength="241" lengthAdjust="spacingAndGlyphs">be referenced from Javascript by the name applied.</text>
<text x="1312.3" y="744" font-size="11" fill="#111" textLength="224" lengthAdjust="spacingAndGlyphs">The Login button has an 'OnClick' tagged value</text>
<text x="1312.3" y="757" font-size="11" fill="#111" textLength="257" lengthAdjust="spacingAndGlyphs">containing Javascript to send the Login Signal with the</text>
<text x="1312.3" y="770" font-size="11" fill="#111" textLength="162" lengthAdjust="spacingAndGlyphs">arguments specified on this dialog.</text>
<text x="1312.3" y="799" font-size="11" fill="#111" textLength="252" lengthAdjust="spacingAndGlyphs">You can also send the Login signal by double clicking</text>
<text x="1312.3" y="812" font-size="11" fill="#111" textLength="259" lengthAdjust="spacingAndGlyphs">on Login in the Simulation Events window. However, in</text>
<text x="1312.3" y="825" font-size="11" fill="#111" textLength="257" lengthAdjust="spacingAndGlyphs">that method you will need to enter strings as Javascript</text>
<text x="1312.3" y="838" font-size="11" fill="#111" textLength="32" lengthAdjust="spacingAndGlyphs">literals.</text>
<text x="1309.3" y="879" font-size="11" fill="#111" textLength="31" lengthAdjust="spacingAndGlyphs">Name:</text>
<rect x="1408.5" y="866.5" width="175" height="22" rx="2" fill="#fff" stroke="#7a7a7a" stroke-width="1"/>
<text x="1413.3" y="880" font-size="11" fill="#111" textLength="47" lengthAdjust="spacingAndGlyphs">Username</text>
<text x="1309.3" y="911" font-size="11" fill="#111" textLength="48.5" lengthAdjust="spacingAndGlyphs">Password:</text>
<rect x="1408.5" y="896.5" width="175" height="22" rx="2" fill="#fff" stroke="#7a7a7a" stroke-width="1"/>
<circle cx="1417.0" cy="905.5" r="2.5" fill="#000"/>
<circle cx="1424.0" cy="905.5" r="2.5" fill="#000"/>
<circle cx="1431.0" cy="905.5" r="2.5" fill="#000"/>
<circle cx="1438.0" cy="905.5" r="2.5" fill="#000"/>
<circle cx="1445.0" cy="905.5" r="2.5" fill="#000"/>
<circle cx="1452.0" cy="905.5" r="2.5" fill="#000"/>
<circle cx="1459.0" cy="905.5" r="2.5" fill="#000"/>
<circle cx="1466.0" cy="905.5" r="2.5" fill="#000"/>
<text x="1307.3" y="949" font-size="11" fill="#111" textLength="40" lengthAdjust="spacingAndGlyphs">Attempts</text>
<rect x="1399.5" y="947.5" width="14" height="14" rx="2" fill="#fff" stroke="#555" stroke-width="1"/>
<text x="1418.3" y="957.7" font-size="11" fill="#111" textLength="47" lengthAdjust="spacingAndGlyphs">UI Control</text>
<rect x="1508.5" y="936.5" width="74" height="22" rx="2" fill="url(#btnG)" stroke="#707070" stroke-width="1"/>
<text x="1545" y="951.7" font-size="11" fill="#111" text-anchor="middle" textLength="25" lengthAdjust="spacingAndGlyphs">Login</text>
<text x="1661" y="717.7" font-size="11" fill="#111" textLength="148.3" lengthAdjust="spacingAndGlyphs">You have logged in sucessfully!</text>
<rect x="1702.5" y="736.5" width="74" height="22" rx="2" fill="url(#btnG)" stroke="#707070" stroke-width="1"/>
<text x="1738.3" y="751.7" font-size="11" fill="#111" text-anchor="middle" textLength="13" lengthAdjust="spacingAndGlyphs">Ok</text>
<path d="M1741,826.7 V780" fill="none" stroke="#000" stroke-width="1" stroke-dasharray="5,3"/>
<path d="M1746.00,793.00 L1741.00,780.00 L1736.00,793.00" fill="none" stroke="#000" stroke-width="1"/>
<text x="1752.7" y="809.3" font-size="10" fill="#111" textLength="33.3" lengthAdjust="spacingAndGlyphs">«trace»</text>
<path d="M1678.3,950.5 H1584" fill="none" stroke="#000" stroke-width="1" stroke-dasharray="5,3"/>
<path d="M1597.00,945.50 L1584.00,950.50 L1597.00,955.50" fill="none" stroke="#000" stroke-width="1"/>
<text x="1613.3" y="963.5" font-size="10" fill="#111" textLength="34" lengthAdjust="spacingAndGlyphs">«trace»</text>
<rect x="1680.5" y="829.2" width="159.4" height="49" rx="2" fill="#000" opacity="0.12"/>
<rect x="1678.5" y="827.2" width="159.4" height="49" rx="2.5" fill="url(#reqG)" stroke="#000" stroke-width="1.1"/>
<path d="M1681,827.7 H1688 V875.7 H1681 Q1679,875.7 1679,873.7 V829.7 Q1679,827.7 1681,827.7 Z" fill="#80f080"/>
<line x1="1688.5" y1="827.2" x2="1688.5" y2="876.2" stroke="#000" stroke-width="1"/>
<line x1="1689.5" y1="827.7" x2="1689.5" y2="875.7" stroke="#fff" stroke-width="1"/>
<line x1="1690.5" y1="827.2" x2="1690.5" y2="876.2" stroke="#000" stroke-width="1"/>
<text x="1695" y="840.7" font-size="10.5" fill="#111" font-weight="bold" textLength="123.3" lengthAdjust="spacingAndGlyphs">REQ027 - Secure Access</text>
<text x="1831" y="864" font-size="8" fill="#e02020" font-style="italic">A</text>
<text x="1710" y="891" font-size="10" fill="#111" font-style="italic" textLength="95" lengthAdjust="spacingAndGlyphs">(from Manage Users)</text>
<path d="M1814.2,876 L1820,886.3 L1814.2,896.7 L1808.4,886.3 Z" fill="#fdf5ea" stroke="#000" stroke-width="1"/>
<line x1="1814.3" y1="896.7" x2="1814.3" y2="916.7" stroke="#000" stroke-width="1"/>
<rect x="1680.5" y="919.2" width="159.4" height="49" rx="2" fill="#000" opacity="0.12"/>
<rect x="1678.5" y="917.2" width="159.4" height="49" rx="2.5" fill="url(#reqG)" stroke="#000" stroke-width="1.1"/>
<path d="M1681,917.7 H1688 V965.7 H1681 Q1679,965.7 1679,963.7 V919.7 Q1679,917.7 1681,917.7 Z" fill="#f2ee9c"/>
<line x1="1688.5" y1="917.2" x2="1688.5" y2="966.2" stroke="#000" stroke-width="1"/>
<line x1="1689.5" y1="917.7" x2="1689.5" y2="965.7" stroke="#fff" stroke-width="1"/>
<line x1="1690.5" y1="917.2" x2="1690.5" y2="966.2" stroke="#000" stroke-width="1"/>
<text x="1695" y="930.7" font-size="10.5" fill="#111" font-weight="bold" textLength="115" lengthAdjust="spacingAndGlyphs">REQ026 - Validate User</text>
<text x="1710" y="981" font-size="10" fill="#111" font-style="italic" textLength="95" lengthAdjust="spacingAndGlyphs">(from Manage Users)</text>
</g>
</svg>
</body></html>
